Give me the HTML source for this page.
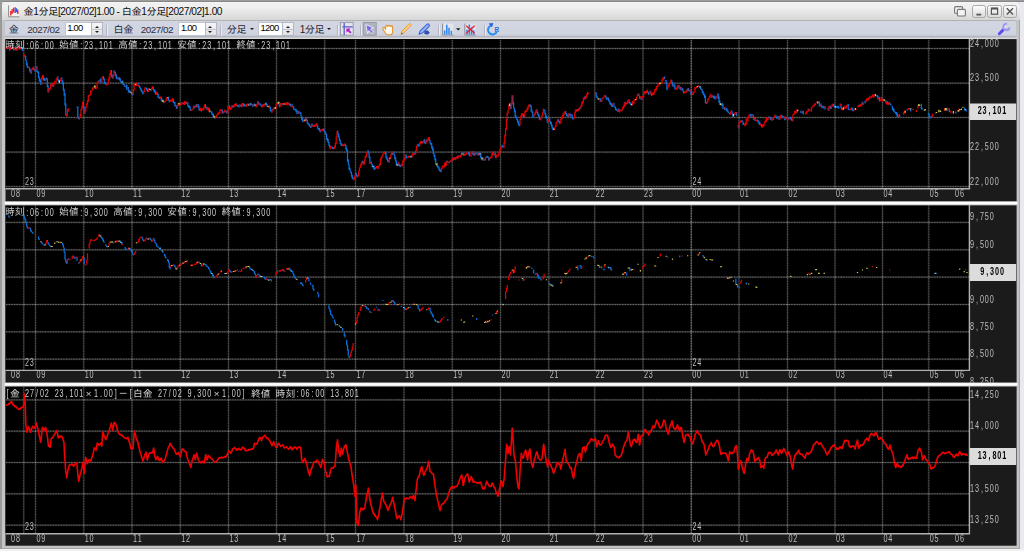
<!DOCTYPE html>
<html lang="ja"><head><meta charset="utf-8"><title>金1分足</title>
<style>
html,body{margin:0;padding:0}
body{width:1024px;height:551px;overflow:hidden;position:relative;background:#e9e9f0;font-family:"Liberation Sans","IPAGothic",sans-serif;font-size:10px;color:#1a1a1a}
body *{position:absolute;box-sizing:border-box}
#o1{left:0;top:0;width:1024px;height:2.4px;background:linear-gradient(#9c9c9c 0,#9c9c9c 1.3px,#878787 1.5px,#878787)}
#o2{left:0;top:0;width:1.8px;height:551px;background:#9a9a9a}
#o3{left:0;top:548.6px;width:1024px;height:3px;background:#f2f2f2}
#win{left:1.8px;top:2.4px;width:1017.8px;height:546.2px;background:#c4c4c4;border-radius:3.5px 3.5px 0 0;border-right:1px solid #a6a6a6;border-bottom:1px solid #a6a6a6}
#title{left:1.8px;top:2.4px;width:1017.8px;height:17.8px;border-radius:3.5px 3.5px 0 0;background:linear-gradient(#fafafa 0,#f0f0f0 1.2px,#f0f0f0 30%,#e6e6e6 55%,#d7d7d7 100%)}
#tt{left:23.6px;top:5.6px;font-size:10.2px;line-height:12px;white-space:nowrap;letter-spacing:-0.47px;color:#0c0c0c}
#tool{left:4.8px;top:20px;width:1011.6px;height:18px;background:linear-gradient(#b2b2b4 0,#b2b2b4 0.8px,#d2d6e2 1.2px,#d0d4e0 14px,#c6cad6 15.6px,#a9adba 16.8px,#a9adba 17.4px,#dcdcdc 17.8px,#dcdcdc)}
.tx{top:24.6px;font-size:10.2px;line-height:10px;white-space:nowrap;color:#23232e}
.nm{letter-spacing:-0.5px;top:25.3px;font-size:9.9px;color:#2a2f42}
.inp{top:22.2px;height:13.6px;background:#fff;border:1px solid #c2c5cf;border-right:0;font-size:9.4px;line-height:10px;padding:0 0 0 1.6px;letter-spacing:-0.75px;color:#000}
.spin{top:22.2px;width:11.6px;height:13.6px;border:1px solid #b4b7c1;background:linear-gradient(#f6f6f8,#e0e0e6)}
.spin:before{position:absolute;content:"";left:2.4px;top:2.8px;border:2.3px solid transparent;border-top:0;border-bottom:2.6px solid #222}
.spin:after{position:absolute;content:"";left:2.400px;top:7.800px;border:2.3px solid transparent;border-bottom:0;border-top:2.6px solid #222}
.spin i{left:0;right:0;top:5.800px;height:1px;background:#c4c6ce}
.sep{top:25px;width:2px;height:10.5px;border-left:1px solid #b3b6c2;background:#ececf4}
.dd{top:28.2px;border:2px solid transparent;border-bottom:0;border-top:2.3px solid #1a1a1a}
.ic{top:22.2px;width:13.4px;height:13.2px}
.wb{top:4.6px;width:14.2px;height:13.6px;border:1px solid #a9a9a9;border-radius:2.6px;background:linear-gradient(#fcfcfc,#ececec 50%,#dadada)}
svg{overflow:visible}
</style></head>
<body>
<div id="o1"></div><div id="o2"></div><div id="o3"></div>
<div id="win"></div>
<div id="title"></div>
<svg style="left:6px;top:3px" width="18" height="17" viewBox="6 3 18 17">
<rect x="8.6" y="5.6" width="10.6" height="11" fill="#f3f3f3"/>
<path d="M8.600 5.400v11.400h10.800" stroke="#8c8c8c" stroke-width="1" fill="none"/>
<path d="M10.800 15.600v-4.600M12.200 13.800v-4.800M15.200 13v-5.800M17.800 14v-4.400" stroke="#f01820" stroke-width="1.300" fill="none"/>
<path d="M13.700 12.600v-4.800M16.500 12.200v-4" stroke="#2060e8" stroke-width="1.300" fill="none"/>
</svg>
<span id="tt">金1分足[2027/02]1.00 - 白金1分足[2027/02]1.00</span>
<svg style="left:950px;top:3px" width="70" height="17" viewBox="950 3 70 17">
<rect x="954.6" y="6.6" width="8" height="6.6" rx="1" fill="#f2f2f2" stroke="#777" stroke-width="1.1"/>
<rect x="957.4" y="9.4" width="8" height="6.6" rx="1" fill="#f2f2f2" stroke="#777" stroke-width="1.1"/>
</svg>
<div class="wb" style="left:971.8px"></div><div class="wb" style="left:987.4px"></div><div class="wb" style="left:1002.8px"></div>
<svg style="left:958px;top:3px" width="62" height="17" viewBox="958 3 62 17" fill="none" stroke="#555" stroke-width="1.5">
<path d="M976.400 14.600h4.800" stroke-width="1.800"/>
<rect x="991.400" y="8.200" width="6.200" height="6" stroke-width="1.200"/><path d="M991.400 8.600h6.200" stroke-width="1.900"/>
<path d="M1006.800 8.200l6.200 6.400M1013 8.200l-6.200 6.400" stroke-width="1.400"/>
</svg>
<div id="tool"></div>
<span class="tx" style="left:8.8px">金</span>
<span class="tx nm" style="left:27.2px">2027/02</span>
<div class="inp" style="left:64.6px;width:26.6px">1.00</div><div class="spin" style="left:91.2px"><i></i></div>
<div class="sep" style="left:106.4px"></div>
<span class="tx" style="left:113.6px;letter-spacing:-0.6px">白金</span>
<span class="tx nm" style="left:140.8px">2027/02</span>
<div class="inp" style="left:178.4px;width:26.6px">1.00</div><div class="spin" style="left:205px"><i></i></div>
<div class="sep" style="left:220.4px"></div>
<span class="tx" style="left:226.8px;letter-spacing:-0.6px">分足</span>
<div class="dd" style="left:250.2px"></div>
<div class="inp" style="left:258px;width:24.2px">1200</div><div class="spin" style="left:282.2px"><i></i></div>
<span class="tx" style="left:299.8px;letter-spacing:-0.6px">1分足</span>
<div class="dd" style="left:327px"></div>
<div class="sep" style="left:336.8px"></div>
<svg style="left:336px;top:21px" width="690" height="17" viewBox="336 21 690 17">
<!-- crosshair tool (pressed) -->
<rect x="340.4" y="22.4" width="12.8" height="12.8" fill="#e4e4e8" stroke="#9a9ca6" stroke-width="1"/>
<path d="M344.2 23v12M342.4 26.8h10.4" stroke="#5a5ad0" stroke-width="1.3" fill="none"/>
<path d="M346.4 28.6h4.2l-1.3 1.3 2.3 2.3-1.4 1.4-2.3-2.3-1.5 1.5z" fill="#b020c0"/>
<rect x="360" y="25" width="1" height="10.5" fill="#b3b6c2"/><rect x="361" y="25" width="1" height="10.5" fill="#ececf4"/>
<!-- pointer (pressed) -->
<rect x="363.2" y="22.4" width="13" height="12.8" fill="#b1b4bd" stroke="#9699a4" stroke-width="1"/>
<path d="M365.8 24.6l7.8 3.2-3 1.2 3 3-1.6 1.6-3-3-1.3 3z" fill="#7a66dc" stroke="#f4f2ff" stroke-width="0.9" stroke-linejoin="round"/>
<!-- hand -->
<path d="M384.6 27.6c-1.2-.6-2.4.6-1.6 1.8l2.4 3.8c.6 1 1.6 1.6 2.8 1.6h1.8c1.6 0 2.6-1.2 2.6-2.8v-5.200c0-1.200-1.600-1.200-1.600 0c0-1.800-1.800-1.800-1.800-.4c0-1.600-1.800-1.600-1.800 0c0-1.400-1.800-1.400-1.800 0v3z" fill="#fff8ec" stroke="#e09838" stroke-width="1.1" stroke-linejoin="round"/>
<!-- pencil -->
<path d="M401 34.400l1-3.200 7.200-7.400c.8-.8 2.600.8 1.800 1.800l-7.200 7.400z" fill="#f6cf8a" stroke="#e8a030" stroke-width="1" stroke-linejoin="round"/>
<path d="M401 34.400l.6-2 1.400 1.400z" fill="#7a5520"/>
<!-- highlighter -->
<path d="M419 34.200l1.200-3.400 7-6.600c1-.9 3 1.100 2 2.100l-6.800 6.800z" fill="#9ab6f4" stroke="#3c64d8" stroke-width="1.1" stroke-linejoin="round"/>
<path d="M424.600 30.800l3.400-.2 1.800 2.400-2.600 1.800-3-1z" fill="#2c4fb0"/>
<rect x="438" y="25" width="1" height="10.500" fill="#b3b6c2"/><rect x="439" y="25" width="1" height="10.500" fill="#ececf4"/>
<!-- bar chart -->
<rect x="442.400" y="23.600" width="11" height="11.400" fill="#e4e4ea"/>
<path d="M442.600 23.600v11.400h11" stroke="#8a8c96" stroke-width="1" fill="none"/>
<path d="M444.600 34.400v-4M446.800 34.400v-9.600M449 34.400v-6.600M451.400 34.400v-3.600" stroke="#2a84f4" stroke-width="1.500" fill="none"/>
<path d="M456 28.200h4.400l-2.200 2.400z" fill="#1a1a1a"/>
<!-- chart with X -->
<rect x="464.600" y="23.600" width="11" height="11.400" fill="#dedee6"/>
<path d="M464.800 23.600v11.400h11" stroke="#8a8c96" stroke-width="1" fill="none"/>
<path d="M467 34.400v-4.600M469.400 34.400v-9.800M471.600 34.400v-6.800M473.800 34.400v-3.800" stroke="#2a84f4" stroke-width="1.500" fill="none"/>
<path d="M466.200 25.800l8.400 7.400M474.600 25.800l-8.400 7.400" stroke="#e82030" stroke-width="1.300" fill="none"/>
<rect x="484" y="25" width="1" height="10.500" fill="#b3b6c2"/><rect x="485" y="25" width="1" height="10.500" fill="#ececf4"/>
<!-- refresh R -->
<path d="M491.400 25.400a4.600 4.600 0 1 0 5.600 5.800" stroke="#2a8cf0" stroke-width="2" fill="none"/>
<path d="M488.600 23.400l4.600-.4-1.200 4.200z" fill="#2060e0"/>
<text x="494.400" y="31.800" font-family="'Liberation Sans',sans-serif" font-size="6.400" font-weight="bold" fill="#2a6ce0">R</text>
<!-- wrench -->
<path d="M999.3 33.7l4.4-4.3" stroke="#5a4af0" stroke-width="2.9" stroke-linecap="round" fill="none"/>
<path d="M1009.5 27.6a3 3 0 1 1-2.600-3.600" stroke="#a29ae8" stroke-width="2.3" fill="none"/>
<path d="M1004.6 27.8l1.400-2.600" stroke="#f0eeff" stroke-width="1.2" fill="none"/>
</svg>
<svg width="1024" height="551" viewBox="0 0 1024 551" style="position:absolute;left:0;top:0;will-change:transform" font-family="'Liberation Sans','IPAGothic',sans-serif" font-size="10">
<defs><filter id="bl" x="0" y="0" width="1024" height="551" filterUnits="userSpaceOnUse"><feGaussianBlur stdDeviation="0.5"/></filter><filter id="bl2" x="0" y="0" width="1024" height="551" filterUnits="userSpaceOnUse"><feGaussianBlur stdDeviation="0.35"/></filter></defs>
<rect x="4.8" y="37.6" width="1012.2" height="1.6" fill="#dadada"/>
<rect x="5.5" y="39.1" width="1011.1" height="162.4" fill="#1b1b1b"/>
<rect x="5.5" y="39.1" width="963.5" height="149.3" fill="#000"/>
<clipPath id="c0"><rect x="6" y="39.6" width="963" height="148.8"/></clipPath>
<g clip-path="url(#c0)" fill="none" stroke="#fff"><path d="M6 48.5H969M6 83.2H969M6 117.5H969M6 152.1H969M6 186.6H969" stroke-width="2.2" stroke-opacity="0.09"/><path d="M6 48.5H969M6 83.2H969M6 117.5H969M6 152.1H969M6 186.6H969" stroke-width="1" stroke-opacity="0.12"/><path d="M6 48.5H969M6 83.2H969M6 117.5H969M6 152.1H969M6 186.6H969" stroke-width="1" stroke-opacity="0.26" stroke-dasharray="1.3 1.3"/><path d="M35.5 39.6V188.4M83.75 39.6V188.4M132 39.6V188.4M180.25 39.6V188.4M228.5 39.6V188.4M276.5 39.6V188.4M324.75 39.6V188.4M355.5 39.6V188.4M404 39.6V188.4M452.25 39.6V188.4M500.5 39.6V188.4M548.75 39.6V188.4M594.75 39.6V188.4M643 39.6V188.4M691.25 39.6V188.4M739 39.6V188.4M787.5 39.6V188.4M835 39.6V188.4M882.5 39.6V188.4M928.75 39.6V188.4M23.75 39.6V188.4M691.25 39.6V188.4" stroke-width="2.2" stroke-opacity="0.08"/><path d="M35.5 39.6V188.4M83.75 39.6V188.4M132 39.6V188.4M180.25 39.6V188.4M228.5 39.6V188.4M276.5 39.6V188.4M324.75 39.6V188.4M355.5 39.6V188.4M404 39.6V188.4M452.25 39.6V188.4M500.5 39.6V188.4M548.75 39.6V188.4M594.75 39.6V188.4M643 39.6V188.4M691.25 39.6V188.4M739 39.6V188.4M787.5 39.6V188.4M835 39.6V188.4M882.5 39.6V188.4M928.75 39.6V188.4M23.75 39.6V188.4M691.25 39.6V188.4" stroke-width="1" stroke-opacity="0.09"/><path d="M35.5 39.6V188.4M83.75 39.6V188.4M132 39.6V188.4M180.25 39.6V188.4M228.5 39.6V188.4M276.5 39.6V188.4M324.75 39.6V188.4M355.5 39.6V188.4M404 39.6V188.4M452.25 39.6V188.4M500.5 39.6V188.4M548.75 39.6V188.4M594.75 39.6V188.4M643 39.6V188.4M691.25 39.6V188.4M739 39.6V188.4M787.5 39.6V188.4M835 39.6V188.4M882.5 39.6V188.4M928.75 39.6V188.4M23.75 39.6V188.4M691.25 39.6V188.4" stroke-width="1" stroke-opacity="0.22" stroke-dasharray="1.3 1.3"/></g>
<g clip-path="url(#c0)"><path d="M7.2 47.6V48.9M8.0 48.1V49.1M9.6 46.5V50.7M12.0 46.5V48.6M13.6 46.6V50.4M15.2 46.7V50.0M16.0 49.4V50.5M20.0 46.2V49.6M22.5 47.0V51.1M24.9 54.8V56.8M25.7 56.0V60.8M26.5 60.4V65.4M27.3 63.2V68.0M28.9 66.3V68.3M29.7 67.8V71.4M30.5 69.5V73.1M33.7 66.8V69.9M34.5 69.5V71.2M36.9 66.2V71.9M37.7 71.1V72.9M38.5 71.6V77.7M39.3 76.4V81.2M40.1 78.8V82.5M40.9 80.2V84.9M43.3 75.3V80.0M44.1 77.7V80.8M44.9 78.5V80.9M46.5 77.6V79.5M47.3 78.4V87.1M48.1 85.3V92.5M52.9 83.6V86.6M57.8 76.2V80.5M58.6 79.3V82.1M61.8 77.5V81.6M62.6 80.3V84.6M63.4 82.1V90.8M64.2 88.9V95.7M65.0 93.2V105.4M65.8 103.3V115.6M77.0 106.7V107.7M77.8 106.5V117.8M78.6 117.3V119.0M83.4 101.6V107.9M84.2 106.4V113.7M95.5 85.5V89.1M98.7 80.4V82.0M100.3 78.6V82.1M101.1 81.2V83.0M103.5 75.9V79.8M104.3 78.3V84.1M105.1 82.3V83.8M105.9 82.3V84.9M111.5 70.0V76.8M112.3 74.5V78.6M114.7 70.4V73.5M115.5 72.3V76.0M116.3 74.5V78.7M117.1 76.8V79.6M118.8 77.3V79.8M119.6 77.2V80.5M120.4 78.5V81.7M121.2 81.6V83.1M122.8 80.5V84.7M123.6 83.6V85.0M124.4 84.2V86.8M126.0 85.1V87.4M126.8 84.8V90.0M128.4 87.1V92.5M129.2 89.8V92.8M130.0 90.8V93.2M131.6 92.0V94.5M132.4 93.0V95.5M138.0 82.7V86.1M139.6 85.3V87.9M140.4 87.3V89.7M141.2 88.4V91.5M142.0 90.0V92.3M142.8 91.3V94.2M146.0 87.6V89.6M146.8 87.7V90.6M147.6 89.1V92.2M149.2 88.1V90.2M150.9 89.2V90.8M153.3 86.9V90.1M154.1 89.0V91.9M154.9 89.8V92.9M155.7 91.2V94.7M157.3 92.4V95.0M158.1 93.6V98.1M158.9 96.5V97.8M159.7 96.7V98.9M161.3 96.7V100.9M162.1 98.4V102.1M163.7 100.2V103.3M168.5 96.8V100.4M169.3 99.9V102.2M171.7 99.9V101.2M173.3 98.8V102.9M174.1 101.5V103.5M174.9 101.9V106.3M175.7 105.0V106.6M176.5 105.4V109.0M179.7 102.8V105.6M183.0 102.4V103.5M183.8 102.6V104.6M185.4 101.8V103.4M186.2 102.1V104.0M187.8 102.1V106.6M188.6 105.3V107.4M189.4 105.5V108.0M190.2 106.6V111.1M194.2 105.7V108.4M196.6 104.2V107.2M198.2 104.1V107.3M199.0 106.0V110.3M199.8 108.7V110.8M201.4 108.5V111.5M205.4 104.1V107.9M206.2 106.4V109.4M207.8 107.0V110.3M209.4 108.0V112.6M211.0 111.4V112.4M211.8 111.2V114.4M212.6 113.2V115.5M213.4 114.1V117.4M215.1 115.9V118.7M221.5 109.4V110.7M222.3 109.6V113.7M223.9 111.3V113.1M225.5 110.4V111.4M226.3 110.6V113.1M229.5 105.4V109.1M232.7 104.9V107.8M235.9 103.3V106.1M237.5 105.0V106.8M238.3 104.7V106.2M239.1 105.7V107.6M240.7 104.7V106.5M241.5 104.6V107.3M243.1 103.1V105.2M243.9 103.6V106.7M244.7 104.2V106.1M245.5 105.0V106.3M248.0 103.4V105.8M250.4 103.3V105.5M251.2 103.1V105.5M252.8 103.9V106.7M254.4 103.6V106.3M256.0 104.4V107.2M258.4 101.6V104.5M260.0 102.9V104.7M260.8 103.9V105.7M261.6 105.2V107.0M263.2 104.0V106.3M266.4 102.5V105.7M267.2 104.2V106.8M269.6 105.5V108.3M270.4 107.0V111.2M271.2 109.7V112.3M272.8 108.9V110.6M279.3 101.7V107.2M280.9 103.1V105.4M283.3 103.2V104.9M285.7 102.9V105.0M287.3 102.1V104.7M288.9 103.0V104.5M289.7 103.4V105.4M290.5 103.8V106.4M292.1 103.8V107.3M293.7 105.9V109.7M294.5 109.3V110.3M295.3 108.8V110.5M296.1 108.8V112.0M296.9 110.4V113.9M298.5 111.0V114.1M300.1 111.8V113.5M300.9 112.4V116.1M301.7 115.8V119.9M302.5 117.9V121.8M303.3 119.9V121.8M306.5 118.0V120.8M307.3 119.8V123.6M308.1 122.8V124.8M308.9 123.4V125.4M309.7 124.3V126.7M310.5 126.1V127.8M312.2 123.8V126.4M313.8 125.1V127.0M317.0 123.7V126.6M317.8 125.7V129.2M318.6 128.3V129.8M319.4 128.1V130.7M320.2 129.6V132.4M321.8 129.7V130.7M323.4 128.5V130.7M324.2 129.4V131.8M325.0 131.0V133.3M325.8 132.3V135.1M326.6 134.1V139.7M327.4 138.0V141.6M328.2 139.1V143.1M329.0 142.0V146.1M329.8 144.9V148.4M332.2 146.4V148.4M333.0 146.9V148.9M333.8 147.9V148.9M337.8 130.5V135.3M338.6 133.4V137.6M339.4 136.5V141.1M340.2 139.6V143.8M341.0 142.7V145.5M341.8 143.4V146.0M343.5 144.4V146.0M345.1 143.8V145.7M345.9 144.7V149.6M346.7 147.7V151.5M347.5 149.9V161.7M348.3 159.2V164.7M349.1 164.3V170.0M349.9 167.6V170.6M350.7 170.2V173.0M351.5 171.9V176.8M352.3 174.9V179.2M353.1 177.4V179.3M356.3 172.8V176.1M357.1 174.5V177.3M362.7 160.8V163.0M363.5 161.8V164.2M368.3 150.2V153.3M369.1 152.5V158.1M369.9 156.8V163.7M371.5 161.4V164.6M372.3 164.1V167.5M373.9 165.3V169.8M374.7 167.3V169.7M377.2 166.1V167.6M378.0 166.8V168.7M385.2 151.3V154.3M386.0 152.8V158.1M386.8 156.2V159.7M387.6 158.2V161.6M388.4 160.2V162.2M392.4 152.3V154.9M394.0 151.4V155.3M394.8 154.8V159.2M395.6 157.3V161.6M396.4 160.5V165.5M398.8 162.6V166.0M399.6 164.3V166.6M400.4 165.0V167.0M402.0 163.6V165.7M406.0 154.2V158.5M406.8 156.4V158.2M410.1 155.6V157.8M414.1 152.3V155.0M418.1 143.7V146.3M418.9 144.7V146.4M421.3 140.9V143.3M422.1 141.3V143.0M424.5 139.1V143.3M425.3 141.2V144.0M426.9 139.4V142.2M429.3 137.2V140.5M430.1 139.9V143.7M430.9 142.6V145.0M431.7 143.1V148.4M432.5 146.2V150.4M433.3 148.5V154.1M434.1 153.2V156.8M434.9 155.1V160.4M435.7 158.6V164.4M437.3 162.7V166.9M438.1 165.4V168.2M438.9 166.8V170.3M439.8 168.8V171.4M440.6 169.7V171.9M443.8 165.6V166.6M445.4 162.7V166.2M447.0 160.5V162.9M448.6 161.7V162.7M453.4 158.3V160.5M455.0 157.1V159.9M457.4 155.9V158.8M459.0 155.4V156.6M459.8 155.5V156.8M463.0 152.3V154.7M463.8 153.2V156.1M465.4 153.7V155.3M468.6 151.9V154.5M469.4 152.7V156.3M470.2 155.2V156.2M472.7 151.0V154.5M473.5 153.4V155.5M474.3 153.1V155.4M475.9 152.4V154.5M476.7 152.7V154.6M478.3 152.6V155.8M480.7 152.7V158.2M481.5 156.3V160.3M483.1 157.5V160.6M484.7 158.8V160.3M486.3 156.8V157.8M487.1 155.7V157.6M487.9 156.1V158.1M488.7 157.5V160.4M493.5 151.4V154.5M495.1 152.9V156.2M495.9 154.9V158.2M502.3 144.9V147.6M503.1 146.0V147.4M510.4 104.7V108.8M512.8 95.5V104.6M513.6 102.2V108.4M514.4 107.9V112.3M515.2 110.2V116.7M516.0 115.2V118.3M516.8 116.9V120.3M517.6 119.2V122.5M518.4 121.1V125.1M519.2 123.1V126.6M523.2 113.4V116.9M524.0 115.1V118.2M530.4 104.6V107.0M531.2 105.5V111.7M532.0 109.7V112.7M532.8 111.8V118.1M536.9 109.3V112.7M537.7 111.8V114.7M538.5 113.7V116.6M539.3 115.3V119.8M540.1 117.9V119.8M544.1 108.9V111.0M544.9 110.2V114.5M545.7 113.1V117.8M546.5 115.8V119.0M547.3 118.7V122.7M549.7 118.3V121.6M550.5 121.1V124.1M551.3 122.1V126.2M552.1 124.8V128.7M552.9 126.9V130.2M558.5 119.5V121.9M559.3 120.8V123.7M565.7 110.9V114.2M566.5 113.0V116.3M567.3 114.8V116.3M568.2 114.3V117.6M569.8 113.2V116.1M570.6 114.0V116.4M572.2 114.3V118.5M573.0 117.2V119.5M577.0 108.9V110.8M577.8 109.4V111.1M580.2 107.0V108.6M585.0 96.1V99.6M596.2 92.5V96.9M597.0 95.8V98.6M597.8 97.5V99.6M600.3 98.3V102.1M605.1 95.3V96.3M605.9 95.6V98.6M606.7 97.3V100.0M608.3 97.4V100.4M609.1 99.0V102.1M609.9 101.3V104.5M610.7 102.6V104.9M611.5 103.3V106.4M612.3 104.2V106.9M613.9 102.8V107.1M614.7 106.5V107.5M615.5 106.5V110.1M616.3 108.4V110.6M617.1 110.0V111.0M618.7 108.5V111.8M621.1 109.4V110.9M625.1 101.8V106.1M629.1 99.4V103.5M629.9 101.9V103.5M630.7 102.4V105.1M633.2 101.3V103.0M638.8 93.6V96.0M639.6 95.7V98.8M641.2 96.9V100.1M645.2 90.9V93.5M647.6 90.6V92.7M648.4 92.0V94.7M650.8 91.2V93.8M651.6 93.4V95.8M653.2 93.0V94.7M657.2 85.7V87.2M664.5 76.6V79.1M665.3 80.2V81.2M666.1 79.9V84.2M666.9 82.7V90.2M671.7 80.0V83.5M672.5 81.9V86.4M674.1 83.5V87.2M674.9 85.6V89.5M678.9 85.1V88.4M680.5 86.7V90.1M682.1 87.7V90.1M682.9 88.5V91.7M683.7 91.1V93.5M685.3 91.4V92.6M686.9 89.6V91.0M688.5 88.0V91.0M689.3 90.2V91.6M690.9 89.6V94.2M691.7 91.5V94.7M699.0 85.8V87.3M700.6 85.9V89.2M701.4 88.7V90.1M702.2 89.3V92.7M703.0 91.1V94.5M703.8 92.4V95.6M704.6 94.2V98.0M705.4 95.8V103.0M706.2 102.1V104.1M711.0 94.8V97.4M712.6 95.6V97.3M713.4 95.8V97.4M714.2 95.5V99.0M715.0 97.3V99.3M716.6 96.8V97.8M718.2 93.5V99.1M719.0 96.5V102.9M719.8 100.5V105.0M721.4 103.8V105.5M722.2 102.8V106.2M723.0 103.7V108.9M724.6 107.5V110.0M726.2 107.7V110.4M727.0 108.6V111.4M727.8 110.1V112.5M728.7 111.7V113.0M729.5 112.7V114.1M731.9 110.6V113.5M732.7 112.4V116.4M736.7 111.9V116.1M738.3 124.9V127.5M742.3 120.2V121.9M743.1 121.5V124.7M743.9 123.3V125.1M747.1 119.1V120.9M750.3 114.2V115.9M751.1 113.8V117.9M752.7 114.2V115.8M753.5 115.6V119.8M755.1 117.6V121.0M757.5 119.6V121.2M758.3 120.3V122.7M759.1 121.6V124.4M759.9 122.2V125.1M761.6 124.0V127.2M763.2 124.5V126.5M767.2 117.9V120.0M768.8 116.6V117.9M769.6 116.7V118.1M770.4 117.4V120.0M772.0 118.0V120.7M776.0 115.5V117.7M776.8 116.7V118.8M778.4 116.4V117.4M779.2 116.0V119.9M781.6 114.8V117.4M782.4 115.7V117.4M783.2 115.9V117.9M784.8 116.8V120.2M786.4 118.0V119.0M788.0 117.2V119.7M790.4 116.7V118.9M791.2 117.8V120.2M792.0 119.0V121.1M796.1 110.8V112.9M800.9 110.7V113.0M802.5 111.5V113.2M803.3 110.8V114.4M808.9 108.7V110.8M809.7 109.8V110.8M819.3 101.3V106.5M820.9 103.6V106.9M821.7 105.4V107.6M822.5 106.8V108.1M823.3 105.8V108.5M825.0 105.9V109.6M828.2 107.6V110.5M830.6 105.8V109.0M833.0 103.8V105.2M833.8 103.7V106.3M834.6 105.3V107.8M836.2 106.0V107.9M837.8 105.8V108.2M838.6 106.1V108.7M841.0 103.8V108.3M841.8 107.1V109.7M845.0 106.2V108.8M848.2 104.1V109.6M849.0 108.9V110.3M849.8 109.2V110.3M852.2 107.7V110.8M853.0 108.5V111.0M859.5 104.6V106.5M862.7 101.8V104.8M865.1 100.8V103.5M867.5 98.4V100.5M873.1 94.6V97.1M877.1 95.0V96.9M877.9 95.7V99.6M879.5 97.1V101.4M881.9 97.8V101.3M883.5 98.9V100.5M885.9 100.3V103.3M887.5 101.2V104.6M889.2 102.1V104.5M890.0 103.6V104.6M890.8 103.4V105.5M892.4 106.0V109.9M893.2 108.3V110.9M894.0 108.5V112.0M894.8 111.3V112.7M895.6 112.0V113.8M896.4 112.0V115.3M897.2 112.7V117.3M898.0 115.2V116.7M899.6 114.6V117.0M906.8 109.5V110.6M910.8 108.1V111.4M921.3 103.8V109.0M922.1 107.7V109.8M928.5 112.9V114.8M929.3 114.0V117.9M930.1 115.9V118.6M946.9 108.3V110.4M949.3 108.6V112.2M955.8 111.6V113.5M964.6 107.4V110.4M966.2 109.2V111.5" stroke="#0a72e0" stroke-width="1.25" fill="none"/><path d="M6.4 46.6V48.7M8.8 46.5V48.8M10.4 46.7V50.0M11.2 47.1V48.1M14.4 47.5V49.5M16.8 48.5V50.8M17.6 46.3V50.2M18.4 45.8V48.4M19.2 46.5V47.5M20.8 47.3V49.8M24.1 53.9V56.7M28.1 66.4V67.6M31.3 69.6V73.9M32.1 68.1V70.4M32.9 67.6V69.2M35.3 67.7V71.3M36.1 66.7V69.2M41.7 77.3V84.8M42.5 74.9V79.3M45.7 78.2V81.1M48.9 88.1V92.4M49.7 87.5V90.3M50.5 84.2V89.3M51.3 84.4V85.8M52.1 82.8V86.4M53.7 83.2V86.9M54.6 81.1V84.6M55.4 80.8V81.8M56.2 78.6V81.9M57.0 77.3V79.7M60.2 79.8V81.8M61.0 77.5V80.7M66.6 114.2V116.3M67.4 109.3V116.4M68.2 108.2V112.0M69.0 108.3V109.3M79.4 116.7V119.7M80.2 113.7V118.0M81.0 108.7V116.1M81.8 105.8V109.9M82.6 101.8V108.3M85.0 109.4V113.7M85.8 106.2V111.5M86.7 103.2V107.6M87.5 100.3V104.6M88.3 95.0V101.9M89.1 95.2V97.0M89.9 94.0V95.5M90.7 90.6V95.5M91.5 90.2V92.5M92.3 87.8V90.6M93.1 87.3V88.7M93.9 86.3V88.7M96.3 87.3V89.2M97.1 82.2V87.9M97.9 81.1V83.6M99.5 79.9V82.1M101.9 77.0V82.1M102.7 76.2V77.4M106.7 84.2V85.5M107.5 83.1V84.7M108.3 78.7V84.5M109.1 76.4V80.5M109.9 72.9V78.4M110.7 70.2V75.3M113.1 75.2V78.7M113.9 70.5V76.6M117.9 77.5V78.8M125.2 85.1V86.1M127.6 87.2V89.4M133.2 89.2V95.1M134.0 83.9V91.1M134.8 83.8V85.8M136.4 82.3V86.0M137.2 83.0V84.2M138.8 84.9V86.9M143.6 91.5V93.9M144.4 88.6V92.2M145.2 87.0V89.1M148.4 88.4V91.9M151.7 87.7V90.8M152.5 86.0V89.0M156.5 91.6V94.9M160.5 96.6V98.7M164.5 101.5V102.5M165.3 100.8V102.2M166.1 98.5V101.1M166.9 96.9V100.9M170.1 100.0V102.3M170.9 99.3V101.6M172.5 98.0V101.4M177.3 105.1V108.7M178.1 103.1V106.5M180.5 103.4V105.4M181.3 102.2V104.8M182.1 102.3V104.5M184.6 101.1V105.0M187.0 101.5V103.7M191.0 109.9V110.9M191.8 109.0V110.7M192.6 108.8V109.8M193.4 105.8V109.3M195.0 105.9V108.0M195.8 104.6V107.4M197.4 104.3V107.2M200.6 107.4V110.9M202.2 109.2V110.5M203.0 108.1V110.6M203.8 106.8V109.9M204.6 104.6V107.7M207.0 107.5V109.0M208.6 107.6V111.5M215.9 116.2V117.9M216.7 114.5V117.5M217.5 113.4V115.3M218.3 112.6V114.7M219.1 112.0V113.7M219.9 109.9V113.4M220.7 109.0V110.9M223.1 111.2V113.5M224.7 109.6V112.0M227.1 111.2V113.9M227.9 106.2V112.6M228.7 106.2V108.8M230.3 107.0V110.0M231.1 106.7V109.5M231.9 104.9V107.4M233.5 106.0V107.7M234.3 103.8V106.9M235.1 103.7V105.9M236.7 103.8V106.2M239.9 103.9V106.8M242.3 102.9V106.5M246.3 103.8V107.0M247.2 103.9V105.7M249.6 102.8V105.5M252.0 104.2V105.6M253.6 104.5V106.3M256.8 103.7V107.2M257.6 101.0V104.5M259.2 102.6V105.4M262.4 104.8V107.4M264.0 103.8V106.7M264.8 103.6V105.1M268.8 105.4V108.0M272.0 109.0V112.8M273.6 107.6V110.3M274.4 107.4V108.6M276.0 104.7V109.2M276.8 102.9V105.4M277.6 102.3V104.2M280.1 103.1V107.2M281.7 103.6V105.9M282.5 103.0V104.0M284.9 102.4V104.7M286.5 102.5V105.2M288.1 102.0V105.2M291.3 104.6V106.7M292.9 105.7V107.7M297.7 110.2V113.6M299.3 111.7V113.6M304.1 119.3V122.3M305.7 117.8V121.6M311.4 123.8V127.8M313.0 125.0V126.8M314.6 124.6V127.0M315.4 124.8V126.2M316.2 122.9V126.2M321.0 129.1V131.6M322.6 128.7V131.3M330.6 146.0V149.2M331.4 146.0V147.3M334.6 147.9V149.3M334.6 145.7V148.0M335.4 142.4V147.5M336.2 136.3V144.2M337.0 130.9V137.2M342.6 144.4V146.3M344.3 143.5V145.6M353.9 177.1V180.3M354.7 175.5V179.5M355.5 174.0V177.4M357.9 175.0V177.6M358.7 170.7V176.1M359.5 167.5V171.1M360.3 165.1V168.0M361.1 163.1V166.1M361.9 161.2V165.0M364.3 159.6V164.4M365.1 156.0V160.7M365.9 155.2V157.8M366.7 152.2V156.6M367.5 150.3V153.8M370.7 162.2V163.4M375.6 166.7V169.4M376.4 166.0V168.2M378.8 165.2V169.0M379.6 163.6V166.2M380.4 158.3V165.0M381.2 156.7V160.4M382.0 155.3V158.2M382.8 153.5V155.8M383.6 152.1V154.1M384.4 152.1V153.8M389.2 157.5V162.8M390.8 154.2V159.2M391.6 152.1V155.6M393.2 151.1V154.0M398.0 161.7V165.1M401.2 164.5V166.3M402.8 160.5V166.5M403.6 159.2V161.7M404.4 158.2V160.7M405.2 154.8V159.6M407.7 156.2V157.8M408.5 156.1V158.0M409.3 155.5V157.6M411.7 154.7V158.0M412.5 153.6V156.6M413.3 152.6V154.4M414.9 153.0V154.8M415.7 150.1V154.3M416.5 146.0V150.9M417.3 144.0V147.0M419.7 142.4V146.4M420.5 141.2V144.2M422.9 141.2V143.8M423.7 139.7V142.4M426.1 139.8V143.8M427.7 138.5V141.9M428.5 136.9V140.2M441.4 167.8V172.3M442.2 165.9V169.1M443.0 165.2V167.7M444.6 162.5V167.6M446.2 161.0V165.9M447.8 161.8V162.9M449.4 161.3V163.2M450.2 161.2V162.2M451.0 159.9V162.0M451.8 159.3V162.1M452.6 157.9V159.8M454.2 157.1V160.0M455.8 157.1V160.2M456.6 156.6V157.9M458.2 155.6V158.4M460.6 155.0V157.7M461.4 152.8V156.5M464.6 153.7V155.8M466.2 152.4V155.0M467.0 152.2V155.0M467.8 151.6V152.7M471.0 151.7V156.8M471.9 150.9V153.4M475.1 152.4V155.9M477.5 153.2V154.7M479.1 152.7V155.7M483.9 159.0V161.0M485.5 156.6V160.6M489.5 157.2V160.4M490.3 157.2V159.1M491.1 156.3V157.9M491.9 153.3V157.8M492.7 151.5V155.8M494.3 153.7V154.8M496.7 154.4V157.7M498.3 153.4V156.7M499.1 151.4V154.6M499.9 148.8V153.7M500.7 146.7V150.6M501.5 145.7V147.8M504.0 142.3V148.3M504.8 134.4V143.7M505.6 128.0V136.8M506.4 119.0V130.0M507.2 112.4V120.4M508.0 110.1V114.0M508.8 104.9V110.4M511.2 102.6V109.1M512.0 95.3V104.5M520.0 119.3V125.8M520.8 115.4V120.1M521.6 113.1V116.6M522.4 113.3V115.9M524.8 111.3V117.6M525.6 110.2V112.7M526.4 110.1V111.9M527.2 107.7V111.2M528.0 105.7V110.0M528.8 104.6V107.5M529.6 104.0V106.5M533.6 114.5V117.6M534.4 113.7V115.4M535.2 111.6V115.1M536.1 109.6V113.4M540.9 117.1V120.5M541.7 115.7V118.3M542.5 112.3V116.3M543.3 108.4V113.5M548.1 119.9V122.0M548.9 119.1V122.3M554.5 127.7V130.1M555.3 125.7V127.8M556.1 122.0V127.1M556.9 120.8V123.8M557.7 119.0V121.8M560.1 121.8V124.1M560.9 118.3V122.9M561.7 116.5V120.5M562.5 115.0V118.4M563.3 113.1V116.7M564.1 112.1V115.1M564.9 110.9V113.2M569.0 113.1V117.2M571.4 114.0V116.6M573.8 116.8V119.5M574.6 112.5V117.9M575.4 109.7V113.6M576.2 109.3V112.0M578.6 108.6V111.3M579.4 107.5V110.1M581.0 105.1V108.4M581.8 101.8V106.8M582.6 101.0V104.4M583.4 97.9V102.6M584.2 97.1V99.6M585.8 96.1V99.3M586.6 94.0V97.9M587.4 92.0V95.1M588.2 92.4V94.6M595.4 92.1V94.7M599.4 98.0V99.0M601.1 100.0V102.1M601.9 98.1V101.4M602.7 97.4V98.6M603.5 97.1V98.4M604.3 95.3V97.3M607.5 97.2V99.1M613.1 102.9V105.8M617.9 109.1V112.1M619.5 109.6V112.8M620.3 109.8V111.2M621.9 109.6V111.5M622.7 106.7V110.1M623.5 105.6V108.6M624.3 102.5V107.2M625.9 103.1V104.9M626.7 102.5V104.1M627.5 100.7V103.9M628.3 99.3V102.6M632.4 100.9V105.4M634.0 99.8V103.7M634.8 99.0V100.9M636.4 96.9V100.3M637.2 94.8V97.6M638.0 93.5V95.4M640.4 96.2V97.9M642.0 95.9V99.7M642.8 96.1V97.1M643.6 92.9V97.8M644.4 91.2V94.6M646.0 91.9V93.2M646.8 89.7V93.2M649.2 93.0V94.3M650.0 90.6V94.4M652.4 92.5V95.6M654.0 91.3V94.7M654.8 88.9V92.9M655.6 88.6V91.0M656.4 86.1V90.2M658.0 82.7V87.1M658.8 83.4V85.1M661.2 82.8V83.9M662.0 79.2V84.1M662.8 77.6V80.8M663.6 77.3V79.8M667.7 86.2V89.9M668.5 84.6V87.5M669.3 82.9V86.1M670.1 83.3V84.3M670.9 79.5V84.1M673.3 84.4V86.5M675.7 88.1V89.4M676.5 87.6V89.9M677.3 85.8V88.9M678.1 85.0V87.2M679.7 86.6V89.3M681.3 87.3V90.6M684.5 91.4V93.6M686.1 89.7V93.0M687.7 88.0V91.8M690.1 89.4V91.4M692.5 93.2V95.1M693.3 92.2V94.9M694.1 91.3V92.9M694.9 86.9V92.2M695.7 87.7V89.2M696.6 86.4V88.1M698.2 85.2V87.0M707.0 101.4V104.2M707.8 98.8V102.6M708.6 97.9V99.8M709.4 96.3V98.3M710.2 93.8V97.5M711.8 94.8V98.0M715.8 96.1V99.4M717.4 93.5V97.6M723.8 106.6V108.9M725.4 107.3V109.6M730.3 112.1V114.8M731.1 110.3V114.4M734.3 113.6V115.1M735.1 112.1V115.1M735.9 111.9V114.2M739.1 122.2V128.3M739.9 121.3V122.8M740.7 120.6V123.1M741.5 120.0V122.1M744.7 123.7V126.1M745.5 122.2V125.9M746.3 118.3V124.6M747.9 117.6V121.4M748.7 114.8V118.3M749.5 114.3V116.5M751.9 115.4V117.5M754.3 117.4V119.4M755.9 119.5V121.1M756.7 119.9V121.5M760.8 123.5V125.9M762.4 124.3V127.4M764.0 123.3V126.2M764.8 121.1V123.7M765.6 119.7V122.4M766.4 117.1V122.0M768.0 117.1V119.9M771.2 118.4V119.4M772.8 118.3V120.2M773.6 116.9V120.0M774.4 115.8V117.4M775.2 114.6V117.6M777.6 115.9V119.3M780.0 117.1V119.4M780.8 115.0V118.4M784.0 115.9V118.6M785.6 116.8V120.1M787.2 116.7V119.3M788.8 118.5V119.8M789.6 117.7V119.2M792.9 114.3V121.4M793.7 113.7V114.9M794.5 111.1V114.4M795.3 110.8V113.5M796.9 109.0V113.2M801.7 110.8V112.9M805.7 112.6V114.5M806.5 111.1V114.3M807.3 111.4V112.5M808.1 108.8V112.1M811.3 107.5V111.7M812.1 106.6V108.6M812.9 105.6V106.8M813.7 104.5V106.7M814.5 103.7V105.8M815.3 102.9V105.6M816.9 101.5V103.2M820.1 104.7V106.4M824.1 106.4V108.0M829.0 106.1V111.0M829.8 105.6V108.1M831.4 105.7V108.9M832.2 103.7V106.9M840.2 103.4V106.0M842.6 107.5V110.5M844.2 105.8V108.9M845.8 106.7V108.2M846.6 105.0V108.5M847.4 104.6V106.8M850.6 108.2V110.1M851.4 107.3V110.2M853.8 109.0V111.6M856.2 108.7V109.7M857.9 105.5V107.6M858.7 105.6V106.9M860.3 104.4V106.8M861.1 104.1V106.0M861.9 102.5V105.6M863.5 103.0V104.8M865.9 99.7V102.6M866.7 98.2V101.1M868.3 97.9V100.5M869.1 97.0V99.0M869.9 95.8V98.7M871.5 96.1V98.2M872.3 94.6V97.4M873.9 94.5V97.7M874.7 94.5V96.1M878.7 98.0V99.5M880.3 99.7V101.3M881.1 96.7V100.7M882.7 98.4V101.7M886.7 101.7V104.4M888.3 101.9V105.1M898.8 114.3V116.6M903.6 112.3V114.7M904.4 110.5V113.7M907.6 109.3V110.5M908.4 107.9V109.9M913.2 108.7V110.3M916.4 109.7V112.1M918.0 105.0V108.6M931.7 115.8V117.8M932.5 113.8V117.2M935.7 112.3V113.8M944.5 108.4V111.0M947.7 107.4V110.4M950.9 110.5V113.2M959.0 108.5V112.1" stroke="#e00000" stroke-width="1.25" fill="none"/><path d="M12.8 47.1V48.1M21.6 47.0V48.0M59.4 80.3V82.9M94.7 85.4V87.5M122.0 81.5V82.5M130.8 91.8V92.8M135.6 83.7V85.0M150.0 89.1V90.1M162.9 100.1V101.9M167.7 97.2V98.2M178.9 103.1V104.4M210.2 110.4V111.6M214.2 115.7V117.6M248.8 104.4V105.4M255.2 104.5V105.5M265.6 103.6V104.6M268.0 106.0V107.0M275.2 107.1V109.1M278.4 101.8V103.7M284.1 103.4V104.6M304.9 119.4V120.9M373.1 165.9V167.1M390.0 157.7V158.7M397.2 164.0V165.7M410.9 156.2V157.2M436.5 163.7V165.3M462.2 153.4V154.4M479.9 153.3V154.4M482.3 157.8V159.2M509.6 103.6V105.9M553.7 128.6V130.0M598.6 98.5V99.7M631.5 103.7V105.2M635.6 98.9V99.9M659.6 83.2V84.2M660.4 82.6V83.7M697.4 85.9V87.3M699.8 86.6V87.6M720.6 103.2V104.9M733.5 114.0V116.4M797.7 109.7V111.3M817.7 101.5V103.5M835.4 106.0V107.4M843.4 107.5V109.8M855.4 108.1V110.1M875.5 94.1V96.3M884.3 99.2V101.1M905.2 110.8V112.7M910.0 108.2V109.5M918.8 104.0V106.1M919.6 104.7V105.7M924.5 109.4V110.8M925.3 108.9V110.2M936.5 112.1V113.1M938.9 109.7V112.2M940.5 110.4V111.9M945.3 107.9V110.3M946.1 107.9V110.5M953.4 111.1V113.4M958.2 110.0V111.7M959.8 109.0V110.4M961.4 108.5V109.9M963.0 106.7V107.7M965.4 109.3V110.3" stroke="#d4ca58" stroke-width="1.25" fill="none"/></g>
<g clip-path="url(#c0)"><text x="5.00" y="48.1" font-size="9.84" fill="#cfcfcf">時刻</text><text transform="translate(24.68 48.5) scale(0.84 1.36)" font-size="8.6" x="1.73 6.39 12.25 19.30 23.97 29.82 36.88" fill="#cfcfcf" xml:space="preserve">:06:00 </text><text x="59.12" y="48.1" font-size="9.84" fill="#cfcfcf">始値</text><text transform="translate(78.80 48.5) scale(0.84 1.36)" font-size="8.6" x="1.73 6.39 12.25 19.30 23.97 29.82 35.68 42.73" fill="#cfcfcf" xml:space="preserve">:23,101 </text><text x="118.16" y="48.1" font-size="9.84" fill="#cfcfcf">高値</text><text transform="translate(137.84 48.5) scale(0.84 1.36)" font-size="8.6" x="1.73 6.39 12.25 19.30 23.97 29.82 35.68 42.73" fill="#cfcfcf" xml:space="preserve">:23,101 </text><text x="177.20" y="48.1" font-size="9.84" fill="#cfcfcf">安値</text><text transform="translate(196.88 48.5) scale(0.84 1.36)" font-size="8.6" x="1.73 6.39 12.25 19.30 23.97 29.82 35.68 42.73" fill="#cfcfcf" xml:space="preserve">:23,101 </text><text x="236.24" y="48.1" font-size="9.84" fill="#cfcfcf">終値</text><text transform="translate(255.92 48.5) scale(0.84 1.36)" font-size="8.6" x="1.73 6.39 12.25 19.30 23.97 29.82 35.68" fill="#cfcfcf" xml:space="preserve">:23,101</text></g>
<path d="M5.5 188.8H969.4V39.1" stroke="#b0b0b0" stroke-width="1.4" fill="none"/>
<g fill="#bdbdbd"><text transform="translate(10.60 196.5) scale(0.84 1.36)" font-size="8.6" x="0.54 6.39" xml:space="preserve">08</text><text transform="translate(36.00 196.5) scale(0.84 1.36)" font-size="8.6" x="0.54 6.39" xml:space="preserve">09</text><text transform="translate(84.25 196.5) scale(0.84 1.36)" font-size="8.6" x="0.54 6.39" xml:space="preserve">10</text><text transform="translate(132.50 196.5) scale(0.84 1.36)" font-size="8.6" x="0.54 6.39" xml:space="preserve">11</text><text transform="translate(180.75 196.5) scale(0.84 1.36)" font-size="8.6" x="0.54 6.39" xml:space="preserve">12</text><text transform="translate(229.00 196.5) scale(0.84 1.36)" font-size="8.6" x="0.54 6.39" xml:space="preserve">13</text><text transform="translate(277.00 196.5) scale(0.84 1.36)" font-size="8.6" x="0.54 6.39" xml:space="preserve">14</text><text transform="translate(325.25 196.5) scale(0.84 1.36)" font-size="8.6" x="0.54 6.39" xml:space="preserve">15</text><text transform="translate(356.00 196.5) scale(0.84 1.36)" font-size="8.6" x="0.54 6.39" xml:space="preserve">17</text><text transform="translate(404.50 196.5) scale(0.84 1.36)" font-size="8.6" x="0.54 6.39" xml:space="preserve">18</text><text transform="translate(452.75 196.5) scale(0.84 1.36)" font-size="8.6" x="0.54 6.39" xml:space="preserve">19</text><text transform="translate(501.00 196.5) scale(0.84 1.36)" font-size="8.6" x="0.54 6.39" xml:space="preserve">20</text><text transform="translate(549.25 196.5) scale(0.84 1.36)" font-size="8.6" x="0.54 6.39" xml:space="preserve">21</text><text transform="translate(595.25 196.5) scale(0.84 1.36)" font-size="8.6" x="0.54 6.39" xml:space="preserve">22</text><text transform="translate(643.50 196.5) scale(0.84 1.36)" font-size="8.6" x="0.54 6.39" xml:space="preserve">23</text><text transform="translate(691.75 196.5) scale(0.84 1.36)" font-size="8.6" x="0.54 6.39" xml:space="preserve">00</text><text transform="translate(739.50 196.5) scale(0.84 1.36)" font-size="8.6" x="0.54 6.39" xml:space="preserve">01</text><text transform="translate(788.00 196.5) scale(0.84 1.36)" font-size="8.6" x="0.54 6.39" xml:space="preserve">02</text><text transform="translate(835.50 196.5) scale(0.84 1.36)" font-size="8.6" x="0.54 6.39" xml:space="preserve">03</text><text transform="translate(883.00 196.5) scale(0.84 1.36)" font-size="8.6" x="0.54 6.39" xml:space="preserve">04</text><text transform="translate(929.25 196.5) scale(0.84 1.36)" font-size="8.6" x="0.54 6.39" xml:space="preserve">05</text><text transform="translate(954.60 196.5) scale(0.84 1.36)" font-size="8.6" x="0.54 6.39" xml:space="preserve">06</text><text transform="translate(24.45 184.70000000000002) scale(0.84 1.36)" font-size="8.6" x="0.54 6.39" xml:space="preserve">23</text><text transform="translate(691.95 184.70000000000002) scale(0.84 1.36)" font-size="8.6" x="0.54 6.39" xml:space="preserve">24</text><text transform="translate(969.60 46.5) scale(0.84 1.36)" font-size="8.6" x="0.54 6.39 13.45 18.11 23.97 29.82" xml:space="preserve">24,000</text><text transform="translate(969.60 81.2) scale(0.84 1.36)" font-size="8.6" x="0.54 6.39 13.45 18.11 23.97 29.82" xml:space="preserve">23,500</text><text transform="translate(969.60 150.1) scale(0.84 1.36)" font-size="8.6" x="0.54 6.39 13.45 18.11 23.97 29.82" xml:space="preserve">22,500</text><text transform="translate(969.60 184.6) scale(0.84 1.36)" font-size="8.6" x="0.54 6.39 13.45 18.11 23.97 29.82" xml:space="preserve">22,000</text></g>
<rect x="969.7" y="103.5" width="46.39999999999998" height="16.5" fill="#dcdcdc"/>
<text transform="translate(977.20 114.35) scale(0.84 1.36)" font-size="8.6" x="0.54 6.39 13.45 18.11 23.97 29.82" fill="#000" font-weight="bold" xml:space="preserve">23,101</text>
<rect x="5.5" y="204.7" width="1011.1" height="178.10000000000002" fill="#1b1b1b"/>
<rect x="5.5" y="204.7" width="963.5" height="165.3" fill="#000"/>
<clipPath id="c1"><rect x="6" y="205.2" width="963" height="164.8"/></clipPath>
<g clip-path="url(#c1)" fill="none" stroke="#fff"><path d="M6 222.4H969M6 249.8H969M6 277.1H969M6 304.5H969M6 331.8H969M6 359.2H969" stroke-width="2.2" stroke-opacity="0.09"/><path d="M6 222.4H969M6 249.8H969M6 277.1H969M6 304.5H969M6 331.8H969M6 359.2H969" stroke-width="1" stroke-opacity="0.12"/><path d="M6 222.4H969M6 249.8H969M6 277.1H969M6 304.5H969M6 331.8H969M6 359.2H969" stroke-width="1" stroke-opacity="0.26" stroke-dasharray="1.3 1.3"/><path d="M35.5 205.2V370.0M83.75 205.2V370.0M132 205.2V370.0M180.25 205.2V370.0M228.5 205.2V370.0M276.5 205.2V370.0M324.75 205.2V370.0M355.5 205.2V370.0M404 205.2V370.0M452.25 205.2V370.0M500.5 205.2V370.0M548.75 205.2V370.0M594.75 205.2V370.0M643 205.2V370.0M691.25 205.2V370.0M739 205.2V370.0M787.5 205.2V370.0M835 205.2V370.0M882.5 205.2V370.0M928.75 205.2V370.0M23.75 205.2V370.0M691.25 205.2V370.0" stroke-width="2.2" stroke-opacity="0.08"/><path d="M35.5 205.2V370.0M83.75 205.2V370.0M132 205.2V370.0M180.25 205.2V370.0M228.5 205.2V370.0M276.5 205.2V370.0M324.75 205.2V370.0M355.5 205.2V370.0M404 205.2V370.0M452.25 205.2V370.0M500.5 205.2V370.0M548.75 205.2V370.0M594.75 205.2V370.0M643 205.2V370.0M691.25 205.2V370.0M739 205.2V370.0M787.5 205.2V370.0M835 205.2V370.0M882.5 205.2V370.0M928.75 205.2V370.0M23.75 205.2V370.0M691.25 205.2V370.0" stroke-width="1" stroke-opacity="0.09"/><path d="M35.5 205.2V370.0M83.75 205.2V370.0M132 205.2V370.0M180.25 205.2V370.0M228.5 205.2V370.0M276.5 205.2V370.0M324.75 205.2V370.0M355.5 205.2V370.0M404 205.2V370.0M452.25 205.2V370.0M500.5 205.2V370.0M548.75 205.2V370.0M594.75 205.2V370.0M643 205.2V370.0M691.25 205.2V370.0M739 205.2V370.0M787.5 205.2V370.0M835 205.2V370.0M882.5 205.2V370.0M928.75 205.2V370.0M23.75 205.2V370.0M691.25 205.2V370.0" stroke-width="1" stroke-opacity="0.22" stroke-dasharray="1.3 1.3"/></g>
<g clip-path="url(#c1)"><path d="M8.8 215.3V217.2M9.6 216.8V217.8M24.1 214.6V218.1M24.9 217.1V220.3M25.7 219.3V223.0M26.5 222.5V226.2M27.3 225.5V228.6M28.1 227.7V228.7M29.7 227.4V228.4M30.5 227.9V231.0M31.3 230.3V232.2M32.1 231.4V232.6M32.9 231.9V233.7M38.5 236.5V239.2M39.3 238.7V240.0M41.7 241.8V243.3M42.5 242.9V244.5M44.1 244.0V245.5M47.3 239.9V242.1M48.1 241.9V244.0M48.9 243.2V245.0M49.7 244.9V246.3M50.5 245.7V246.7M57.8 241.3V242.3M59.4 241.7V242.8M61.8 242.3V243.3M62.6 242.9V245.2M63.4 244.6V247.7M64.2 247.6V252.5M65.0 251.9V259.4M65.8 258.8V262.5M66.6 261.5V263.7M69.0 258.5V260.0M73.8 255.8V257.7M74.6 257.2V258.7M77.0 256.7V260.7M78.6 262.6V263.6M83.4 256.1V258.2M84.2 257.6V264.4M93.9 240.2V241.2M99.5 234.3V236.4M101.1 235.5V237.8M101.9 236.9V238.9M102.7 238.2V240.4M103.5 239.4V242.2M104.3 241.5V242.5M105.9 244.2V246.1M106.7 245.8V247.2M113.1 241.4V243.3M117.1 240.5V241.9M120.4 240.8V243.0M122.0 242.1V244.8M125.2 246.9V249.2M126.0 248.4V249.7M126.8 249.1V250.1M130.0 247.9V250.0M130.8 249.0V250.7M131.6 249.8V252.0M132.4 251.0V254.3M133.2 253.7V254.7M134.0 254.0V255.2M142.0 236.6V238.4M142.8 238.4V240.4M143.6 239.8V241.6M146.8 237.8V239.2M150.0 237.5V239.6M150.9 238.8V240.2M151.7 239.7V241.5M154.1 238.3V241.0M154.9 240.5V242.9M155.7 242.6V243.8M156.5 243.5V246.4M157.3 245.6V246.6M158.1 246.2V247.9M160.5 247.5V249.9M162.9 250.7V252.9M164.5 253.7V255.9M165.3 255.3V257.8M166.1 257.3V258.4M167.7 259.0V261.2M168.5 260.1V263.1M169.3 262.6V267.9M170.1 267.5V269.5M170.1 266.4V267.4M174.1 264.5V266.1M174.9 265.5V266.9M175.7 266.4V269.5M199.0 261.6V263.0M199.8 262.7V263.7M201.4 263.5V266.3M204.6 263.8V264.8M205.4 264.0V265.0M206.2 264.6V266.4M207.0 265.8V267.0M207.8 266.4V267.4M208.6 267.0V269.1M209.4 268.7V270.1M210.2 269.9V272.6M211.0 271.6V274.0M212.6 273.5V275.7M213.4 274.5V277.0M214.2 276.2V278.2M224.7 272.9V273.9M229.5 269.6V271.0M230.3 270.8V271.9M231.1 271.2V272.7M239.1 270.8V271.8M249.6 266.6V268.5M250.4 267.9V269.5M251.2 268.8V269.8M252.8 269.6V271.0M253.6 270.2V271.4M254.4 271.1V273.6M255.2 272.8V275.0M256.0 274.8V277.4M258.4 273.8V274.8M259.2 274.2V275.2M260.0 274.9V276.8M262.4 276.3V277.3M264.0 276.7V277.8M264.8 277.1V279.3M265.6 278.5V279.8M267.2 278.4V279.4M268.0 278.9V280.3M270.4 278.9V279.9M271.2 279.2V281.4M279.3 270.2V271.6M283.3 269.2V270.9M284.1 270.5V271.6M287.3 268.3V269.4M289.7 267.7V270.0M290.5 269.2V271.1M292.1 270.8V272.1M292.9 271.3V274.1M293.7 273.4V276.0M294.5 275.4V277.7M295.3 277.0V278.7M296.1 278.2V279.5M300.9 282.1V283.9M301.7 282.7V284.3M302.5 283.4V285.8M303.3 285.3V286.3M308.1 277.6V279.1M308.9 278.2V281.4M310.5 282.4V284.7M312.2 284.7V285.7M313.0 284.9V289.3M313.8 288.8V290.9M317.8 291.8V294.1M318.6 293.9V297.2M329.0 305.3V309.0M329.8 308.4V311.4M330.6 310.2V314.7M331.4 314.0V315.2M332.2 314.7V317.2M333.0 316.9V318.8M334.6 319.6V322.6M335.4 321.9V325.4M337.8 324.1V325.1M339.4 325.0V326.7M340.2 326.3V327.3M342.6 327.9V331.0M344.3 332.3V335.7M345.1 335.0V337.4M346.7 339.8V345.2M347.5 344.4V350.4M348.3 349.6V355.6M349.1 355.2V358.1M365.1 305.2V306.5M365.9 305.9V307.5M366.7 306.8V308.9M368.3 308.0V310.3M369.9 310.8V312.8M376.4 306.8V307.8M378.0 308.8V310.5M379.6 309.5V310.8M382.8 300.1V301.1M392.4 299.9V301.3M393.2 300.3V302.0M394.0 301.3V303.0M394.8 302.2V304.8M395.6 303.9V304.9M401.2 306.0V307.0M404.4 306.9V309.0M405.2 308.2V309.7M406.0 309.0V310.0M410.1 306.5V307.9M417.3 304.2V305.5M418.1 305.1V308.7M418.9 308.3V309.4M419.7 308.8V311.5M429.3 307.5V308.5M430.1 307.7V311.0M430.9 310.8V313.2M431.7 312.4V314.5M432.5 313.7V316.3M433.3 315.1V317.7M434.9 318.7V320.9M437.3 320.7V322.6M438.9 321.5V323.0M447.8 319.0V320.7M476.7 318.1V319.9M486.3 321.5V323.0M492.7 314.4V315.6M502.3 303.7V304.9M513.6 270.0V273.3M523.2 278.3V280.8M529.6 266.1V267.7M532.0 267.6V269.0M533.6 269.5V273.2M535.2 273.4V274.8M536.9 272.8V274.3M537.7 273.7V276.1M538.5 275.2V278.8M540.1 277.9V279.1M540.9 279.0V280.6M548.9 282.3V283.5M549.7 283.2V285.1M552.1 284.3V286.4M577.8 265.5V270.2M580.2 264.9V266.3M581.0 265.4V268.8M591.4 255.7V256.9M593.0 255.9V257.0M593.8 256.8V258.5M599.4 265.6V267.9M601.9 267.2V268.4M604.3 268.8V270.1M608.3 266.5V268.2M610.7 267.1V269.4M611.5 268.7V270.6M625.9 272.3V273.5M626.7 273.3V275.6M629.9 267.6V270.8M667.7 256.6V257.6M679.7 255.5V257.3M703.0 255.0V256.5M703.8 256.2V258.0M707.0 259.6V261.1M735.9 278.6V284.9M737.5 284.5V287.4M739.1 286.4V288.0M746.3 282.6V284.4M841.3 276.4V277.6M934.7 272.7V273.9M965.8 269.4V270.6" stroke="#0a72e0" stroke-width="1.25" fill="none"/><path d="M23.3 214.7V215.7M28.9 227.1V228.6M35.3 230.3V231.6M45.7 242.9V245.4M46.5 240.3V243.6M55.4 242.3V243.5M60.2 241.9V242.9M67.4 259.3V263.4M68.2 258.6V259.6M69.8 258.9V260.3M72.2 256.2V259.0M73.0 255.6V257.2M75.4 257.6V258.7M76.2 256.5V258.1M79.4 261.8V263.4M80.2 259.4V262.4M81.8 258.0V260.4M82.6 256.3V258.7M85.8 264.4V265.5M86.7 259.7V264.7M87.5 253.2V260.3M89.1 243.7V248.4M89.9 240.9V244.3M90.7 239.3V241.3M91.5 239.0V240.5M93.1 240.0V241.0M94.7 239.6V241.0M95.5 239.3V240.6M96.3 238.7V240.1M97.1 237.0V239.3M98.7 234.4V236.7M107.5 246.0V247.5M109.1 243.0V246.3M109.9 241.4V243.5M113.9 242.2V243.3M116.3 240.6V242.6M117.9 240.6V241.6M122.8 243.9V244.9M127.6 249.1V250.1M128.4 247.7V249.6M134.8 252.1V255.1M135.6 250.8V252.8M137.2 241.8V243.2M138.0 241.6V242.6M138.8 239.1V242.5M139.6 237.8V239.8M140.4 237.1V238.1M141.2 236.4V237.4M144.4 240.6V241.6M145.2 238.7V241.2M146.0 237.8V239.1M147.6 238.7V239.7M149.2 237.9V239.5M152.5 240.7V241.8M153.3 238.1V240.9M170.9 265.3V267.2M172.5 264.9V265.9M173.3 264.4V265.4M177.3 266.9V269.2M178.1 265.4V267.5M178.9 264.7V266.0M180.5 264.6V265.6M181.3 263.7V265.3M182.1 263.0V264.2M183.8 262.4V263.4M184.6 261.8V263.3M186.2 260.9V262.3M191.0 264.7V266.2M192.6 264.5V265.8M194.2 264.2V265.2M195.0 263.5V264.9M195.8 263.5V264.5M196.6 262.1V264.2M198.2 261.4V262.5M202.2 265.3V266.5M203.0 263.8V266.1M215.1 277.2V278.2M216.7 275.3V277.0M217.5 274.1V275.7M219.1 272.7V274.3M220.7 271.0V272.6M227.1 272.3V273.7M227.9 271.3V273.2M228.7 269.5V272.0M231.9 271.6V272.7M234.3 270.9V272.0M235.9 269.9V271.1M237.5 269.2V270.7M240.7 271.0V272.0M241.5 269.0V271.4M243.1 268.1V269.1M243.9 267.5V268.5M245.5 266.4V268.5M247.2 266.1V267.2M256.8 275.1V277.5M257.6 273.7V275.6M266.4 278.6V279.8M269.6 279.0V280.3M275.2 274.4V275.4M276.0 272.5V274.6M276.8 271.9V273.6M277.6 270.4V272.6M280.1 270.2V272.1M280.9 269.8V271.1M281.7 269.6V270.7M282.5 269.0V270.0M284.9 270.4V271.7M286.5 268.0V269.6M288.9 267.8V269.4M305.7 279.8V282.7M306.5 277.8V280.1M349.9 355.7V357.8M350.7 352.4V356.2M351.5 350.1V353.1M352.3 346.8V350.7M353.1 343.0V347.3M356.3 321.1V324.0M357.1 317.0V321.7M357.9 313.9V317.5M358.7 312.1V314.9M360.3 307.5V311.1M361.1 306.3V308.2M361.9 305.1V306.5M364.3 305.4V306.4M367.5 308.0V309.0M371.5 311.9V313.1M373.9 309.6V310.9M374.7 308.4V310.1M378.8 309.8V310.8M388.4 303.4V304.7M389.2 302.3V304.0M390.0 301.9V302.9M391.6 299.9V302.4M397.2 304.1V305.4M399.6 303.3V304.4M406.8 308.1V310.3M407.7 307.5V309.0M414.9 303.7V304.8M420.5 309.9V310.9M421.3 308.8V310.4M422.1 308.1V309.7M422.9 306.8V308.6M428.5 307.4V309.8M439.8 321.8V323.1M440.6 320.2V322.1M441.4 319.0V321.1M442.2 317.9V319.6M443.8 316.8V318.0M487.1 320.8V322.9M488.7 320.9V321.9M491.1 319.3V320.6M496.7 310.9V314.1M501.5 303.7V304.8M505.6 291.5V298.9M506.4 287.9V292.0M507.2 285.1V288.9M508.8 275.4V279.9M509.6 273.9V276.2M510.4 271.9V274.6M512.0 269.7V272.2M514.4 269.8V273.0M515.2 266.3V269.9M519.2 279.4V280.4M524.0 279.2V280.6M527.2 266.2V268.4M528.8 266.0V267.2M536.1 273.3V274.7M541.7 278.8V280.3M543.3 276.4V279.3M544.1 273.8V277.2M561.7 279.3V283.1M567.3 272.1V274.1M568.2 271.0V272.4M569.0 269.9V271.5M569.8 268.6V270.2M577.0 265.9V267.9M581.8 266.2V268.5M585.8 257.3V259.5M588.2 255.8V257.3M604.3 264.8V267.3M603.5 268.7V270.3M624.3 272.2V274.2M634.0 268.9V270.3M642.8 266.5V268.4M643.6 265.5V267.0M644.4 264.8V266.2M645.2 263.5V264.9M660.4 253.5V256.4M682.1 255.5V256.5M699.0 252.9V255.3M728.7 277.7V278.7M740.7 281.7V283.8M741.5 279.7V282.3M808.3 272.4V273.6M872.5 266.1V267.3M889.7 269.4V270.6" stroke="#e00000" stroke-width="1.25" fill="none"/><path d="M40.9 241.3V242.3M44.9 244.5V245.5M51.3 246.0V247.0M52.1 246.1V247.1M54.6 242.8V243.8M57.0 241.2V242.2M58.6 241.8V242.8M61.0 241.8V242.9M81.0 259.5V260.5M100.3 235.4V236.5M108.3 246.0V247.0M110.7 241.5V242.5M111.5 241.5V242.5M112.3 241.6V242.6M115.5 241.3V242.3M118.8 240.7V241.7M119.6 240.6V241.6M121.2 242.0V243.0M129.2 247.8V248.8M136.4 242.2V243.2M148.4 238.6V239.6M159.7 247.8V248.8M162.1 250.3V251.3M171.7 265.1V266.1M176.5 268.6V269.6M179.7 264.8V265.8M183.0 262.5V263.8M185.4 261.1V262.1M187.0 260.5V261.5M191.8 264.7V265.7M197.4 261.7V262.7M200.6 263.1V264.1M203.8 263.3V264.4M211.8 273.1V274.1M218.3 273.7V274.7M221.5 270.6V271.6M225.5 272.9V273.9M226.3 273.1V274.1M233.5 271.0V272.0M235.1 270.5V271.5M246.3 266.4V267.4M248.0 266.0V267.0M248.8 266.0V267.0M252.0 269.2V270.2M260.8 276.1V277.1M261.6 276.0V277.0M268.8 279.7V280.7M288.1 268.5V269.5M291.3 270.5V271.5M296.9 278.9V279.9M307.3 277.4V278.4M337.0 324.2V325.2M341.0 326.7V327.9M355.5 323.4V324.4M362.7 304.9V305.9M386.0 303.8V304.8M386.8 303.9V304.9M387.6 303.9V304.9M390.8 301.8V302.8M398.0 304.0V305.0M403.6 307.0V308.0M408.5 307.2V308.2M414.1 303.8V305.0M416.5 304.1V305.1M426.9 309.3V310.3M435.7 320.4V321.4M438.1 321.5V322.5M461.4 319.6V320.6M463.8 321.7V322.7M464.6 321.5V322.5M472.7 315.6V316.6M484.7 321.9V323.0M485.5 321.3V322.3M487.9 320.7V322.2M489.5 320.2V321.2M495.9 312.9V313.9M497.5 310.5V311.6M503.1 303.9V305.2M512.8 269.6V270.6M522.4 277.9V278.9M526.4 266.9V268.4M528.0 266.0V267.2M546.5 279.3V280.3M550.5 284.6V285.6M551.3 284.4V285.4M552.9 285.4V286.4M560.9 282.2V283.5M564.9 273.0V274.0M565.7 273.4V274.4M566.5 273.1V274.1M576.2 267.1V268.1M585.0 258.6V259.6M586.6 257.3V258.4M589.0 255.3V256.3M589.8 255.1V256.1M597.8 264.7V265.7M598.6 265.1V266.1M601.1 266.6V267.6M605.1 264.3V265.3M609.1 267.3V268.3M622.7 273.6V274.7M623.5 273.7V274.7M625.1 272.1V273.1M628.3 267.4V268.4M629.1 267.4V268.4M631.5 269.2V270.4M632.4 268.9V270.0M638.0 263.8V264.8M640.4 270.1V271.4M654.8 265.4V266.4M655.6 265.4V266.4M658.0 257.1V258.1M666.1 255.7V256.7M672.5 258.6V259.7M687.7 255.3V256.3M698.2 254.5V255.5M699.8 252.3V253.3M704.6 257.2V258.2M706.2 259.1V260.1M710.2 259.1V260.1M711.8 259.5V260.5M712.6 259.6V260.6M720.6 266.2V267.3M721.4 266.2V267.2M727.8 277.4V279.0M729.5 277.3V278.3M731.1 276.7V277.7M733.5 280.5V281.5M736.7 284.1V285.1M748.7 283.5V284.5M755.9 286.6V287.6M756.7 286.8V288.0M790.8 275.7V276.9M807.5 274.1V275.3M810.0 273.6V274.8M811.7 272.7V273.9M815.8 269.1V270.3M818.7 272.7V273.9M816.3 269.1V270.3M819.2 272.7V273.9M824.2 272.7V273.9M857.5 271.9V273.1M862.5 269.4V270.6M867.0 267.7V268.9M876.7 266.9V268.1M935.8 272.7V273.9M959.7 268.6V269.8M964.2 271.1V272.3M967.0 271.9V273.1" stroke="#d4ca58" stroke-width="1.25" fill="none"/></g>
<g clip-path="url(#c1)"><text x="5.00" y="215.29999999999998" font-size="9.84" fill="#cfcfcf">時刻</text><text transform="translate(24.68 215.7) scale(0.84 1.36)" font-size="8.6" x="1.73 6.39 12.25 19.30 23.97 29.82 36.88" fill="#cfcfcf" xml:space="preserve">:06:00 </text><text x="59.12" y="215.29999999999998" font-size="9.84" fill="#cfcfcf">始値</text><text transform="translate(78.80 215.7) scale(0.84 1.36)" font-size="8.6" x="1.73 6.39 13.45 18.11 23.97 29.82 36.88" fill="#cfcfcf" xml:space="preserve">:9,300 </text><text x="113.24" y="215.29999999999998" font-size="9.84" fill="#cfcfcf">高値</text><text transform="translate(132.92 215.7) scale(0.84 1.36)" font-size="8.6" x="1.73 6.39 13.45 18.11 23.97 29.82 36.88" fill="#cfcfcf" xml:space="preserve">:9,300 </text><text x="167.36" y="215.29999999999998" font-size="9.84" fill="#cfcfcf">安値</text><text transform="translate(187.04 215.7) scale(0.84 1.36)" font-size="8.6" x="1.73 6.39 13.45 18.11 23.97 29.82 36.88" fill="#cfcfcf" xml:space="preserve">:9,300 </text><text x="221.48" y="215.29999999999998" font-size="9.84" fill="#cfcfcf">終値</text><text transform="translate(241.16 215.7) scale(0.84 1.36)" font-size="8.6" x="1.73 6.39 13.45 18.11 23.97 29.82" fill="#cfcfcf" xml:space="preserve">:9,300</text></g>
<path d="M5.5 370.4H969.4V204.7" stroke="#b0b0b0" stroke-width="1.4" fill="none"/>
<g fill="#bdbdbd"><text transform="translate(10.60 378.1) scale(0.84 1.36)" font-size="8.6" x="0.54 6.39" xml:space="preserve">08</text><text transform="translate(36.00 378.1) scale(0.84 1.36)" font-size="8.6" x="0.54 6.39" xml:space="preserve">09</text><text transform="translate(84.25 378.1) scale(0.84 1.36)" font-size="8.6" x="0.54 6.39" xml:space="preserve">10</text><text transform="translate(132.50 378.1) scale(0.84 1.36)" font-size="8.6" x="0.54 6.39" xml:space="preserve">11</text><text transform="translate(180.75 378.1) scale(0.84 1.36)" font-size="8.6" x="0.54 6.39" xml:space="preserve">12</text><text transform="translate(229.00 378.1) scale(0.84 1.36)" font-size="8.6" x="0.54 6.39" xml:space="preserve">13</text><text transform="translate(277.00 378.1) scale(0.84 1.36)" font-size="8.6" x="0.54 6.39" xml:space="preserve">14</text><text transform="translate(325.25 378.1) scale(0.84 1.36)" font-size="8.6" x="0.54 6.39" xml:space="preserve">15</text><text transform="translate(356.00 378.1) scale(0.84 1.36)" font-size="8.6" x="0.54 6.39" xml:space="preserve">17</text><text transform="translate(404.50 378.1) scale(0.84 1.36)" font-size="8.6" x="0.54 6.39" xml:space="preserve">18</text><text transform="translate(452.75 378.1) scale(0.84 1.36)" font-size="8.6" x="0.54 6.39" xml:space="preserve">19</text><text transform="translate(501.00 378.1) scale(0.84 1.36)" font-size="8.6" x="0.54 6.39" xml:space="preserve">20</text><text transform="translate(549.25 378.1) scale(0.84 1.36)" font-size="8.6" x="0.54 6.39" xml:space="preserve">21</text><text transform="translate(595.25 378.1) scale(0.84 1.36)" font-size="8.6" x="0.54 6.39" xml:space="preserve">22</text><text transform="translate(643.50 378.1) scale(0.84 1.36)" font-size="8.6" x="0.54 6.39" xml:space="preserve">23</text><text transform="translate(691.75 378.1) scale(0.84 1.36)" font-size="8.6" x="0.54 6.39" xml:space="preserve">00</text><text transform="translate(739.50 378.1) scale(0.84 1.36)" font-size="8.6" x="0.54 6.39" xml:space="preserve">01</text><text transform="translate(788.00 378.1) scale(0.84 1.36)" font-size="8.6" x="0.54 6.39" xml:space="preserve">02</text><text transform="translate(835.50 378.1) scale(0.84 1.36)" font-size="8.6" x="0.54 6.39" xml:space="preserve">03</text><text transform="translate(883.00 378.1) scale(0.84 1.36)" font-size="8.6" x="0.54 6.39" xml:space="preserve">04</text><text transform="translate(929.25 378.1) scale(0.84 1.36)" font-size="8.6" x="0.54 6.39" xml:space="preserve">05</text><text transform="translate(954.60 378.1) scale(0.84 1.36)" font-size="8.6" x="0.54 6.39" xml:space="preserve">06</text><text transform="translate(24.45 366.3) scale(0.84 1.36)" font-size="8.6" x="0.54 6.39" xml:space="preserve">23</text><text transform="translate(691.95 366.3) scale(0.84 1.36)" font-size="8.6" x="0.54 6.39" xml:space="preserve">24</text><text transform="translate(969.60 220.4) scale(0.84 1.36)" font-size="8.6" x="0.54 7.59 12.25 18.11 23.97" xml:space="preserve">9,750</text><text transform="translate(969.60 247.8) scale(0.84 1.36)" font-size="8.6" x="0.54 7.59 12.25 18.11 23.97" xml:space="preserve">9,500</text><text transform="translate(969.60 302.5) scale(0.84 1.36)" font-size="8.6" x="0.54 7.59 12.25 18.11 23.97" xml:space="preserve">9,000</text><text transform="translate(969.60 329.8) scale(0.84 1.36)" font-size="8.6" x="0.54 7.59 12.25 18.11 23.97" xml:space="preserve">8,750</text><text transform="translate(969.60 357.2) scale(0.84 1.36)" font-size="8.6" x="0.54 7.59 12.25 18.11 23.97" xml:space="preserve">8,500</text><text transform="translate(969.60 384.5) scale(0.84 1.36)" font-size="8.6" x="0.54 7.59 12.25 18.11 23.97" xml:space="preserve">8,250</text></g>
<rect x="969.7" y="264" width="46.39999999999998" height="17" fill="#dcdcdc"/>
<text transform="translate(979.80 275.1) scale(0.84 1.36)" font-size="8.6" x="0.54 7.59 12.25 18.11 23.97" fill="#000" font-weight="bold" xml:space="preserve">9,300</text>
<rect x="5.5" y="385.9" width="1011.1" height="159.80000000000007" fill="#1b1b1b"/>
<rect x="5.5" y="385.9" width="963.5" height="147.5" fill="#000"/>
<clipPath id="c2"><rect x="6" y="386.4" width="963" height="147.0"/></clipPath>
<g clip-path="url(#c2)" fill="none" stroke="#fff"><path d="M6 399.9H969M6 431.2H969M6 462.5H969M6 493.8H969M6 525.2H969" stroke-width="2.2" stroke-opacity="0.09"/><path d="M6 399.9H969M6 431.2H969M6 462.5H969M6 493.8H969M6 525.2H969" stroke-width="1" stroke-opacity="0.12"/><path d="M6 399.9H969M6 431.2H969M6 462.5H969M6 493.8H969M6 525.2H969" stroke-width="1" stroke-opacity="0.26" stroke-dasharray="1.3 1.3"/><path d="M35.5 386.4V533.4M83.75 386.4V533.4M132 386.4V533.4M180.25 386.4V533.4M228.5 386.4V533.4M276.5 386.4V533.4M324.75 386.4V533.4M355.5 386.4V533.4M404 386.4V533.4M452.25 386.4V533.4M500.5 386.4V533.4M548.75 386.4V533.4M594.75 386.4V533.4M643 386.4V533.4M691.25 386.4V533.4M739 386.4V533.4M787.5 386.4V533.4M835 386.4V533.4M882.5 386.4V533.4M928.75 386.4V533.4M23.75 386.4V533.4M691.25 386.4V533.4" stroke-width="2.2" stroke-opacity="0.08"/><path d="M35.5 386.4V533.4M83.75 386.4V533.4M132 386.4V533.4M180.25 386.4V533.4M228.5 386.4V533.4M276.5 386.4V533.4M324.75 386.4V533.4M355.5 386.4V533.4M404 386.4V533.4M452.25 386.4V533.4M500.5 386.4V533.4M548.75 386.4V533.4M594.75 386.4V533.4M643 386.4V533.4M691.25 386.4V533.4M739 386.4V533.4M787.5 386.4V533.4M835 386.4V533.4M882.5 386.4V533.4M928.75 386.4V533.4M23.75 386.4V533.4M691.25 386.4V533.4" stroke-width="1" stroke-opacity="0.09"/><path d="M35.5 386.4V533.4M83.75 386.4V533.4M132 386.4V533.4M180.25 386.4V533.4M228.5 386.4V533.4M276.5 386.4V533.4M324.75 386.4V533.4M355.5 386.4V533.4M404 386.4V533.4M452.25 386.4V533.4M500.5 386.4V533.4M548.75 386.4V533.4M594.75 386.4V533.4M643 386.4V533.4M691.25 386.4V533.4M739 386.4V533.4M787.5 386.4V533.4M835 386.4V533.4M882.5 386.4V533.4M928.75 386.4V533.4M23.75 386.4V533.4M691.25 386.4V533.4" stroke-width="1" stroke-opacity="0.22" stroke-dasharray="1.3 1.3"/></g>
<g clip-path="url(#c2)"><path d="M6.0 405.0L6.0 405.2L6.9 405.0L7.8 404.7L8.5 403.8L8.7 404.4L9.6 403.3L10.5 402.8L11.0 401.7L11.4 401.3L12.3 403.2L13.2 405.1L13.5 404.7L14.1 405.5L15.0 406.8L15.9 406.4L16.0 407.2L16.8 407.8L17.7 408.2L18.5 409.3L18.6 409.4L19.5 409.2L20.4 408.1L20.7 408.8L21.3 407.8L22.2 407.2L22.7 407.2L23.1 406.5L24.0 403.5L24.0 403.0L24.7 393.8L24.9 397.5L25.2 403.0L25.7 423.0L25.8 424.6L26.7 430.5L26.8 432.2L27.6 430.1L28.5 426.5L28.5 427.2L29.4 428.4L30.3 432.0L30.7 432.2L31.2 430.1L32.1 427.5L32.7 426.3L33.0 427.4L33.9 428.0L34.7 428.0L34.8 427.2L35.7 425.7L36.3 423.0L36.6 424.1L37.5 427.7L37.7 428.0L38.4 430.8L39.3 436.1L39.3 435.5L40.2 440.2L40.7 442.2L41.1 439.1L42.0 430.8L42.3 427.2L42.9 428.0L43.8 429.9L44.0 430.5L44.7 428.9L45.6 427.5L45.7 428.0L46.5 431.4L47.3 436.3L47.4 436.6L48.3 444.8L48.5 446.3L49.2 445.8L50.1 447.4L50.2 447.2L51.0 440.9L51.3 438.8L51.9 437.9L52.8 437.9L53.0 437.2L53.7 435.9L54.6 434.1L54.7 434.3L55.5 432.6L56.4 431.1L56.5 430.5L57.3 432.7L58.2 437.7L58.5 438.0L59.1 436.6L60.0 437.0L60.7 436.0L60.9 436.8L61.8 436.3L62.7 438.0L62.7 438.6L63.6 441.3L64.0 443.0L64.5 453.1L64.7 456.3L65.4 466.5L65.7 471.3L66.3 474.2L66.8 478.0L67.2 474.8L68.0 469.7L68.1 470.1L69.0 466.2L69.7 464.7L69.9 465.0L70.8 465.0L71.7 464.6L71.8 463.8L72.6 464.7L73.5 466.1L73.5 466.3L74.4 465.0L75.2 463.8L75.3 464.2L76.2 462.7L76.8 463.0L77.1 466.6L77.7 473.0L78.0 476.3L78.7 481.3L78.9 480.9L79.8 475.5L80.2 474.7L80.7 473.6L81.6 469.0L81.8 468.8L82.5 464.8L83.0 462.2L83.4 465.6L84.3 473.4L84.3 473.0L85.2 462.4L85.7 457.2L86.1 459.6L87.0 462.6L87.3 463.8L87.9 462.1L88.8 459.9L89.0 459.7L89.7 459.7L90.6 460.3L91.0 461.3L91.5 458.7L92.4 456.1L92.7 454.7L93.3 453.0L94.2 448.0L94.3 448.0L95.1 448.0L96.0 449.7L96.0 450.5L96.9 445.2L97.3 443.0L97.8 443.5L98.7 444.6L99.0 445.5L99.6 444.8L100.5 443.8L100.7 443.0L101.4 445.0L101.8 446.3L102.3 438.3L102.7 432.2L103.2 432.7L104.1 436.5L104.3 436.3L105.0 437.2L105.7 439.7L105.9 439.1L106.8 437.4L107.7 434.7L107.7 433.9L108.6 432.3L109.5 430.1L109.7 428.8L110.4 426.5L111.3 423.6L111.3 423.0L112.2 427.2L112.7 430.5L113.1 428.2L114.0 423.2L114.3 422.2L114.9 423.6L115.8 424.0L116.0 424.7L116.7 426.9L117.6 430.8L118.0 431.3L118.5 432.7L119.4 434.3L120.2 434.7L120.3 434.6L121.2 435.0L122.1 435.8L122.3 435.5L123.0 436.3L123.9 437.1L124.3 438.0L124.8 438.0L125.7 438.0L126.3 438.8L126.6 438.4L127.5 438.5L128.0 437.2L128.4 439.3L129.3 441.9L129.7 443.0L130.2 445.3L131.0 448.8L131.1 448.6L132.0 448.1L132.9 448.4L133.0 448.8L133.8 438.0L134.0 434.7L134.7 431.3L134.7 432.1L135.6 435.2L136.0 437.2L136.5 438.9L137.4 441.1L137.7 441.3L138.3 444.5L139.2 448.5L139.3 448.8L140.1 452.0L141.0 454.7L141.0 454.4L141.9 458.0L142.8 460.3L143.0 461.3L143.7 458.5L144.6 455.4L144.7 454.7L145.5 453.4L146.0 452.2L146.4 454.1L147.3 460.2L147.3 459.7L148.2 456.9L149.0 453.8L149.1 453.9L150.0 452.6L150.9 453.1L151.0 453.0L151.8 452.4L152.7 452.7L152.7 452.8L153.6 448.2L153.7 448.0L154.5 454.8L154.7 455.5L155.4 458.0L156.0 459.7L156.3 459.6L157.2 457.0L157.7 456.3L158.1 457.7L159.0 460.1L159.3 460.5L159.9 460.3L160.8 458.4L161.3 458.0L161.7 459.7L162.6 462.6L162.7 462.2L163.5 461.4L164.4 460.8L164.7 459.7L165.3 458.5L166.2 455.1L166.3 454.7L167.1 452.1L168.0 448.3L168.5 447.2L168.9 446.7L169.8 444.6L170.0 443.3L170.7 444.3L171.6 446.1L171.7 445.8L172.5 447.3L173.4 448.5L174.2 449.2L174.3 448.9L175.2 452.0L176.1 453.8L176.3 454.2L177.0 453.9L177.9 452.7L178.3 452.5L178.8 453.7L179.7 455.8L180.3 456.7L180.6 455.7L181.5 451.8L182.0 449.2L182.4 448.7L183.3 449.6L184.2 450.8L184.2 450.7L185.1 451.6L185.8 451.7L186.0 451.9L186.9 456.2L187.5 458.3L187.8 459.5L188.7 461.2L189.2 463.3L189.6 464.4L190.5 466.2L190.8 467.5L191.4 464.2L192.3 460.3L192.5 460.0L193.2 457.6L194.1 454.7L194.2 455.0L195.0 458.1L195.3 460.0L195.9 456.2L196.7 453.0L196.8 453.5L197.7 457.1L198.3 460.0L198.6 460.5L199.5 461.6L200.3 462.5L200.4 462.0L201.3 463.0L202.2 461.2L202.5 462.0L203.1 462.2L204.0 462.5L204.2 463.0L204.9 459.3L205.8 454.5L205.8 455.0L206.7 459.3L207.0 460.0L207.6 458.3L208.5 455.5L208.7 455.8L209.4 456.9L210.3 457.0L210.8 458.3L211.2 458.7L212.1 459.0L213.0 460.0L213.0 460.1L213.9 461.6L214.8 462.1L215.3 462.0L215.7 461.5L216.6 461.4L217.5 460.0L217.5 460.2L218.4 458.9L219.3 457.7L219.7 458.0L220.2 457.9L221.1 457.4L221.7 457.0L222.0 457.8L222.9 457.8L223.8 457.2L224.2 457.0L224.7 456.6L225.6 457.3L226.5 455.5L226.7 456.3L227.4 453.7L228.3 452.0L228.7 450.8L229.2 451.6L230.1 451.9L230.8 453.3L231.0 453.1L231.9 451.3L232.5 449.2L232.8 448.8L233.7 448.4L234.6 447.6L234.7 448.0L235.5 448.3L236.4 450.2L236.7 449.7L237.3 449.0L238.2 449.4L238.7 448.3L239.1 449.4L240.0 449.5L240.8 450.0L240.9 449.5L241.8 449.1L242.5 447.0L242.7 447.2L243.6 448.0L244.5 448.7L244.7 449.2L245.4 450.6L246.3 450.5L246.7 450.8L247.2 450.3L248.1 450.3L249.0 449.4L249.2 450.0L249.9 449.9L250.8 449.3L251.3 449.2L251.7 448.7L252.6 449.1L253.3 448.3L253.5 448.3L254.4 443.5L254.7 443.3L255.3 443.7L256.2 443.7L256.3 444.2L257.1 443.4L258.0 440.8L258.0 441.3L258.9 438.9L259.8 437.4L260.0 437.5L260.7 438.0L261.6 440.7L261.7 440.0L262.5 438.0L263.3 436.7L263.4 436.8L264.3 435.7L265.0 435.0L265.2 435.6L266.1 437.2L266.7 438.0L267.0 438.6L267.9 438.1L268.7 439.2L268.8 439.8L269.7 440.4L270.3 441.7L270.6 442.4L271.5 444.3L272.0 445.8L272.4 444.5L273.3 442.6L273.7 441.7L274.2 443.1L275.1 445.4L275.3 446.3L276.0 447.2L276.9 447.6L277.0 447.5L277.8 444.2L278.3 443.3L278.7 443.4L279.6 444.8L280.3 445.8L280.5 446.5L281.4 446.1L282.3 445.2L282.5 445.0L283.2 445.1L284.1 447.7L284.7 448.0L285.0 447.7L285.9 447.3L286.7 446.7L286.8 447.2L287.7 448.2L288.6 449.1L288.7 449.2L289.5 448.6L290.3 446.7L290.4 446.6L291.3 447.8L292.2 449.8L292.5 449.7L293.1 448.4L294.0 447.5L294.7 447.0L294.9 447.8L295.8 447.2L296.7 448.7L296.7 449.2L297.6 448.2L298.5 447.0L298.7 447.0L299.4 446.8L300.3 447.9L300.8 447.5L301.2 453.7L301.7 460.0L302.1 460.2L303.0 462.5L303.0 462.5L303.9 460.3L304.7 458.3L304.8 458.7L305.7 460.6L306.3 462.5L306.6 463.1L307.5 467.9L308.0 470.0L308.4 471.9L309.3 473.8L309.7 475.8L310.2 472.7L310.8 470.0L311.1 469.9L312.0 467.6L312.5 465.8L312.9 465.3L313.8 462.5L314.7 461.7L314.7 462.0L315.6 461.7L316.5 461.0L316.7 460.0L317.4 461.3L318.3 461.3L318.7 462.5L319.2 464.3L320.1 465.3L320.8 467.5L321.0 466.9L321.9 462.9L322.5 459.2L322.8 460.3L323.7 461.5L324.2 463.3L324.6 465.1L325.5 470.7L325.8 471.7L326.4 473.5L327.0 476.7L327.3 476.9L328.2 476.5L329.1 476.1L329.2 476.7L330.0 473.1L330.8 469.2L330.9 468.4L331.8 468.1L332.7 468.2L333.0 468.3L333.6 467.0L334.5 466.1L334.7 466.7L335.0 466.3L335.4 461.0L336.3 448.9L336.3 448.0L337.2 442.5L337.5 439.7L338.1 445.0L338.7 451.3L339.0 452.5L339.9 455.6L340.0 456.3L340.8 451.5L341.3 448.0L341.7 449.8L342.5 453.8L342.6 454.2L343.5 449.6L344.2 447.2L344.4 446.1L345.3 445.8L345.8 444.7L346.2 445.9L347.1 451.2L347.5 453.0L348.0 455.3L348.9 460.0L349.2 460.5L349.8 462.8L350.7 466.1L350.8 466.3L351.6 471.3L352.5 478.1L352.5 478.0L353.4 483.0L354.2 488.0L354.3 489.8L355.0 496.3L355.2 493.6L355.8 484.7L356.1 494.7L356.3 504.7L356.7 523.0L357.0 523.0L357.9 524.6L358.3 525.5L358.8 521.5L359.7 513.0L359.7 512.3L360.6 509.4L360.8 508.0L361.5 508.9L362.4 508.9L362.5 509.7L363.3 509.6L364.2 508.3L364.7 508.8L365.1 505.4L366.0 500.3L366.3 498.0L366.9 494.7L367.8 491.3L368.3 488.0L368.7 490.7L369.6 497.2L369.7 498.0L370.5 502.7L371.3 506.3L371.4 505.8L372.3 510.3L373.2 512.6L373.3 513.8L374.1 513.9L375.0 516.0L375.3 515.5L375.9 516.9L376.8 517.8L377.5 519.7L377.7 518.0L378.6 515.0L379.2 511.3L379.5 509.8L380.4 505.1L380.8 502.2L381.3 499.0L382.2 494.9L382.5 493.0L383.1 497.0L383.7 501.3L384.0 501.4L384.9 502.9L385.8 504.8L385.8 504.7L386.7 506.7L387.6 509.2L388.0 510.5L388.5 508.4L389.4 507.0L390.0 504.7L390.3 504.3L391.2 502.8L391.7 501.3L392.1 499.4L392.7 497.2L393.0 499.4L393.9 503.4L394.2 504.7L394.8 508.0L395.7 512.5L395.8 513.0L396.6 517.2L397.0 518.8L397.5 518.1L398.4 516.5L399.2 516.3L399.3 515.8L400.2 517.9L400.8 519.7L401.1 517.6L402.0 514.5L402.5 511.3L402.9 508.5L403.8 502.7L404.2 499.7L404.7 498.4L405.6 498.5L406.3 498.0L406.5 498.7L407.4 498.6L408.3 498.7L408.3 498.8L409.2 498.1L410.1 496.7L410.3 497.2L411.0 497.2L411.9 498.2L412.0 498.8L412.8 496.6L413.3 495.5L413.7 496.4L414.6 499.9L415.0 500.5L415.5 495.2L416.3 488.0L416.4 487.1L417.3 480.0L417.5 478.8L418.2 477.2L419.1 476.1L419.2 476.3L420.0 472.1L420.8 468.8L420.9 468.7L421.8 466.7L422.0 467.2L422.7 471.4L423.6 474.9L423.7 475.5L424.5 474.2L425.3 471.3L425.4 471.5L426.3 469.7L427.0 468.0L427.2 467.2L428.1 464.4L428.7 461.3L429.0 463.2L429.9 470.9L430.0 471.3L430.8 471.8L431.7 473.0L431.7 473.3L432.6 473.9L433.3 473.8L433.5 474.5L434.4 481.3L434.7 483.8L435.3 487.1L436.2 493.3L436.3 494.7L437.1 497.2L437.5 499.7L438.0 501.6L438.7 504.7L438.9 506.5L439.8 509.4L440.0 510.5L440.7 507.7L441.6 504.8L441.7 504.7L442.5 503.6L443.4 503.6L443.7 503.0L444.3 502.7L445.2 500.9L445.3 501.3L446.1 499.7L447.0 499.1L447.0 498.8L447.9 496.4L448.7 493.0L448.8 492.9L449.7 490.3L450.3 488.8L450.6 489.4L451.5 486.8L452.0 487.2L452.4 486.6L453.3 488.1L454.2 488.0L454.2 487.8L455.1 486.5L456.0 486.7L456.3 486.3L456.9 486.5L457.8 484.5L458.3 483.8L458.7 482.5L459.6 479.4L460.3 478.0L460.5 476.9L461.4 476.0L461.7 474.7L462.3 478.8L463.2 485.4L463.3 485.5L464.1 481.3L465.0 477.6L465.0 478.0L465.9 475.7L466.8 474.8L467.5 473.8L467.7 474.1L468.6 478.9L469.2 482.2L469.5 481.2L470.4 479.0L471.3 476.5L471.3 477.2L472.2 478.5L473.0 481.3L473.1 482.2L474.0 481.2L474.9 482.1L475.0 482.2L475.8 482.3L476.7 482.9L477.0 483.0L477.6 482.4L478.5 482.9L479.2 483.3L479.4 482.5L480.3 482.6L480.8 482.2L481.2 484.2L482.1 486.8L482.5 488.0L483.0 488.8L483.9 488.1L484.7 488.8L484.8 487.5L485.7 485.0L486.6 481.6L486.7 481.3L487.5 483.2L488.4 484.7L488.7 485.5L489.3 486.0L490.2 486.5L490.8 486.3L491.1 486.5L492.0 483.7L492.5 483.0L492.9 483.8L493.8 486.6L494.7 488.0L494.7 487.6L495.6 490.1L496.3 493.0L496.5 493.0L497.4 494.4L498.0 496.3L498.3 495.3L499.2 490.9L499.3 489.7L500.0 486.7L500.1 485.9L501.0 481.7L501.3 480.8L501.9 482.1L502.8 485.5L503.0 486.7L503.7 481.0L504.2 478.3L504.6 472.6L505.3 463.3L505.5 461.1L506.4 447.6L506.7 444.2L507.3 447.8L508.0 453.3L508.2 452.5L509.1 446.3L509.2 446.7L510.0 452.1L510.3 455.0L510.9 448.0L511.3 443.3L511.8 434.7L512.2 428.3L512.7 434.5L513.3 443.3L513.6 447.5L514.2 456.7L514.5 457.3L515.3 460.0L515.4 461.2L516.3 471.0L516.7 475.0L517.2 480.3L518.0 486.7L518.1 487.1L519.0 488.8L519.0 488.3L519.9 473.5L520.0 471.7L520.8 460.6L521.3 453.3L521.7 455.0L522.6 457.4L523.0 458.3L523.5 457.1L524.4 453.1L524.7 451.7L525.3 451.1L525.8 450.0L526.2 451.8L527.1 458.1L527.5 460.0L528.0 456.9L528.7 453.3L528.9 452.0L529.8 449.1L530.0 449.2L530.7 456.0L531.3 463.3L531.6 463.6L532.5 466.5L533.0 467.5L533.4 464.9L534.3 459.6L534.7 458.3L535.2 457.0L536.1 453.7L536.7 451.7L537.0 452.2L537.9 455.8L538.3 458.3L538.8 458.2L539.7 459.5L540.0 460.0L540.6 460.1L541.5 459.5L542.0 458.3L542.4 455.1L543.3 446.8L543.7 444.2L544.2 447.7L545.0 453.3L545.1 453.7L546.0 459.3L546.3 461.7L546.9 463.3L547.5 466.7L547.8 465.1L548.7 460.0L548.7 460.7L549.6 463.2L550.3 465.0L550.5 464.6L551.4 467.2L552.0 468.3L552.3 468.7L553.2 472.3L553.7 473.3L554.1 471.9L555.0 470.1L555.3 468.3L555.9 467.3L556.8 463.7L557.5 462.5L557.7 462.3L558.6 464.1L559.5 464.0L559.7 464.2L560.4 467.2L560.8 469.2L561.3 466.5L562.2 462.1L562.5 460.0L563.1 458.3L564.0 454.1L564.2 453.3L564.9 450.5L565.0 449.2L565.8 456.3L566.3 460.8L566.7 460.7L567.6 463.3L568.0 463.3L568.5 464.2L569.4 465.4L569.7 466.7L570.3 468.1L571.2 467.4L571.3 468.3L572.1 472.8L572.5 475.0L573.0 476.4L573.7 478.3L573.9 477.2L574.8 469.7L575.0 468.3L575.7 465.4L576.6 462.4L576.7 462.5L577.5 458.2L578.3 455.0L578.4 455.0L579.3 453.8L580.0 453.3L580.2 454.9L581.1 459.1L581.3 460.8L582.0 453.4L582.5 448.3L582.9 447.5L583.8 447.9L584.2 446.7L584.7 449.5L585.3 451.7L585.6 451.3L586.5 447.8L587.0 445.8L587.4 445.0L588.3 443.2L589.2 442.5L589.2 443.0L590.1 441.0L591.0 438.9L591.3 439.2L591.9 439.1L592.8 439.7L593.3 440.8L593.7 440.7L594.6 439.9L595.3 438.3L595.5 438.9L596.4 445.5L596.7 446.7L597.3 444.2L598.2 441.6L598.3 440.8L599.1 443.4L600.0 445.2L600.0 445.0L600.9 444.8L601.8 443.3L602.0 443.3L602.7 441.1L603.6 440.2L603.7 440.0L604.5 438.2L605.4 435.5L605.8 435.0L606.3 435.0L607.2 435.4L607.5 435.8L608.1 437.4L609.0 441.5L609.2 442.5L609.9 444.5L610.8 447.4L610.8 447.5L611.7 446.1L612.5 444.2L612.6 444.1L613.5 446.5L614.2 446.7L614.4 448.9L615.3 455.5L615.3 455.0L616.2 456.2L617.0 456.7L617.1 457.0L618.0 457.1L618.9 457.9L619.2 457.5L619.8 456.5L620.7 455.9L621.3 455.0L621.6 454.4L622.5 451.1L623.3 448.3L623.4 447.8L624.3 444.7L625.0 443.3L625.2 442.3L626.1 441.3L627.0 440.1L627.0 440.0L627.9 434.8L628.3 431.7L628.8 435.2L629.7 440.8L629.7 440.6L630.6 444.8L631.3 446.7L631.5 445.7L632.4 443.3L633.0 440.8L633.3 439.8L634.2 440.1L634.7 439.2L635.1 440.2L636.0 442.2L636.7 442.5L636.9 442.0L637.8 437.2L638.3 434.2L638.7 437.7L639.6 444.9L639.7 445.0L640.5 439.2L640.8 436.7L641.4 435.7L642.3 435.6L643.0 435.0L643.2 435.1L644.1 431.3L645.0 430.0L645.0 429.2L645.9 430.7L646.8 432.0L647.0 432.5L647.7 432.7L648.6 434.7L648.7 435.0L649.5 432.9L650.4 431.9L650.8 430.8L651.3 430.4L652.2 428.4L653.0 425.8L653.1 426.1L654.0 426.6L654.7 427.5L654.9 426.0L655.8 423.6L656.7 420.0L656.7 420.2L657.6 422.2L658.3 423.3L658.5 423.5L659.4 426.7L660.3 427.8L660.3 428.3L661.2 427.1L662.0 426.7L662.1 425.9L663.0 422.9L663.7 420.0L663.9 421.0L664.8 420.9L665.0 421.7L665.7 425.7L666.6 430.9L666.7 430.8L667.5 432.0L668.3 434.2L668.4 433.1L669.3 429.4L670.0 425.8L670.2 425.9L671.1 423.7L672.0 421.2L672.0 420.8L672.9 424.7L673.7 428.3L673.8 428.3L674.7 428.8L675.6 429.8L675.8 429.2L676.5 427.2L677.4 424.9L677.5 425.0L678.3 427.3L679.2 430.4L679.7 430.8L680.1 429.4L681.0 427.4L681.3 427.5L681.9 430.5L682.5 435.0L682.8 436.5L683.7 440.6L684.2 442.5L684.6 440.0L685.5 436.0L685.8 435.0L686.4 434.9L687.3 434.7L688.0 434.2L688.2 434.8L689.1 436.2L689.7 436.7L690.0 436.9L690.9 440.3L691.3 441.7L691.8 442.7L692.7 443.8L693.0 443.3L693.6 440.5L694.5 437.7L695.0 435.0L695.4 434.2L696.3 432.5L696.7 430.8L697.2 431.0L698.1 433.0L698.7 433.3L699.0 434.2L699.9 434.5L700.3 435.0L700.8 436.2L701.7 439.9L702.0 441.7L702.6 442.0L703.5 443.3L704.2 445.0L704.4 445.8L705.3 452.0L705.8 455.0L706.2 453.4L707.1 452.3L707.5 450.8L708.0 449.7L708.9 447.2L709.2 445.8L709.8 445.4L710.7 443.8L711.3 442.5L711.6 443.8L712.5 445.7L713.3 446.7L713.4 446.8L714.3 445.8L715.2 442.9L715.3 443.3L716.1 441.6L717.0 440.3L717.5 440.3L717.9 441.0L718.8 443.8L719.2 445.0L719.7 447.9L720.6 453.2L720.8 454.2L721.5 454.3L722.4 452.9L723.0 453.3L723.3 453.1L724.2 453.2L725.0 453.0L725.1 452.9L726.0 453.8L726.9 455.9L727.0 455.8L727.8 458.6L728.3 460.8L728.7 458.6L729.6 452.1L729.7 451.7L730.5 453.1L731.4 453.9L731.7 453.3L732.3 452.3L733.2 453.1L733.7 452.5L734.1 451.3L735.0 447.2L735.0 447.5L735.9 445.9L736.7 445.8L736.8 447.5L737.7 458.3L737.7 458.6L738.3 469.2L738.6 468.4L739.5 464.8L739.7 463.3L740.4 461.6L740.8 460.8L741.3 462.6L742.2 467.0L742.5 468.3L743.1 470.5L744.0 473.3L744.2 473.3L744.9 469.1L745.8 463.2L745.8 463.3L746.7 459.3L747.0 458.3L747.6 460.0L748.3 460.8L748.5 460.0L749.4 454.7L750.0 452.5L750.3 451.9L751.2 450.3L751.7 450.0L752.1 450.9L753.0 451.3L753.3 452.5L753.9 456.0L754.7 461.7L754.8 460.8L755.7 460.1L756.3 459.2L756.6 459.8L757.5 458.3L758.3 457.5L758.4 457.4L759.3 460.1L759.7 460.0L760.2 462.7L760.8 467.5L761.1 467.0L762.0 466.9L762.5 465.8L762.9 465.8L763.7 468.3L763.8 467.9L764.7 461.0L765.0 459.2L765.6 457.8L766.5 457.5L767.0 457.5L767.4 456.2L768.3 453.4L768.7 452.5L769.2 452.7L770.1 452.3L770.8 453.3L771.0 453.0L771.9 455.2L772.5 455.0L772.8 454.7L773.7 454.0L774.6 452.7L774.7 453.3L775.5 451.3L776.3 450.0L776.4 450.9L777.3 452.7L778.2 454.7L778.3 455.0L779.1 451.9L780.0 449.8L780.0 450.0L780.9 452.3L781.7 453.3L781.8 452.9L782.7 450.9L783.6 449.2L783.7 448.3L784.5 450.2L785.3 451.7L785.4 452.1L786.3 453.3L787.0 455.8L787.2 454.5L788.1 453.5L788.7 451.7L789.0 452.5L789.9 456.0L790.3 456.7L790.8 460.1L791.7 465.0L791.7 465.8L792.6 468.7L792.7 469.2L793.5 462.4L793.7 460.0L794.4 457.7L795.0 455.0L795.3 455.4L796.2 453.4L797.0 453.3L797.1 453.6L798.0 451.2L798.7 450.0L798.9 451.4L799.8 453.7L800.3 454.2L800.7 453.8L801.6 454.5L802.5 454.6L802.5 455.0L803.4 456.3L804.3 457.4L804.7 458.3L805.2 457.3L806.1 454.1L806.7 453.3L807.0 452.9L807.9 453.8L808.7 454.2L808.8 453.3L809.7 452.8L810.6 452.6L810.8 451.7L811.5 451.0L812.4 448.0L812.5 448.3L813.3 445.5L814.2 444.2L814.2 444.7L815.1 443.9L816.0 442.2L816.3 441.7L816.9 441.6L817.8 442.7L818.3 443.7L818.7 444.3L819.6 444.0L820.3 443.0L820.5 442.5L821.4 444.3L822.3 446.2L822.5 446.7L823.2 447.1L824.1 448.9L824.7 449.2L825.0 449.8L825.9 452.7L826.8 453.9L827.0 455.0L827.7 453.7L828.6 452.7L829.2 450.8L829.5 450.8L830.0 450.0L830.4 448.6L831.3 447.2L832.0 446.7L832.2 446.8L833.1 445.6L834.0 444.9L834.2 445.0L834.9 446.1L835.8 447.7L836.3 448.3L836.7 449.3L837.6 448.4L838.3 449.2L838.5 449.1L839.4 447.4L840.3 446.8L840.3 446.7L841.2 448.1L842.0 448.7L842.1 447.7L843.0 445.4L843.9 442.9L844.2 441.7L844.8 440.4L845.7 441.2L846.3 440.3L846.6 440.3L847.5 440.7L848.0 440.8L848.4 442.4L849.3 445.9L849.7 446.7L850.2 446.2L851.1 447.4L851.3 447.5L852.0 446.2L852.9 446.0L853.3 445.8L853.8 446.5L854.7 447.8L855.0 449.2L855.6 446.4L856.5 443.1L856.7 442.5L857.4 440.6L857.5 440.0L858.3 446.4L858.7 448.3L859.2 447.3L860.1 446.2L860.8 445.0L861.0 445.3L861.9 445.3L862.8 445.0L863.0 444.2L863.7 443.8L864.6 441.2L865.0 440.8L865.5 439.5L866.4 439.5L866.7 438.3L867.3 438.6L868.2 440.5L868.3 440.8L869.1 438.6L870.0 435.0L870.0 435.0L870.9 433.9L871.7 433.3L871.8 434.2L872.7 434.3L873.6 435.8L873.7 435.8L874.5 435.1L875.4 432.6L875.8 432.5L876.3 433.2L877.2 435.2L877.5 435.8L878.1 437.7L878.7 439.2L879.0 438.5L879.9 438.6L880.8 437.6L880.8 438.3L881.7 438.6L882.6 440.1L883.0 440.8L883.5 440.9L884.4 443.4L885.0 443.3L885.3 443.4L886.2 445.0L887.0 446.7L887.1 447.3L888.0 448.6L888.7 449.2L888.9 448.0L889.8 446.2L890.0 445.0L890.7 447.8L891.3 450.0L891.6 450.5L892.5 453.1L893.0 454.2L893.4 456.3L894.2 461.7L894.3 461.7L895.2 465.9L895.8 467.5L896.1 466.4L897.0 464.0L897.0 463.3L897.9 464.6L898.7 466.7L898.8 466.1L899.7 466.1L900.6 467.4L900.8 467.0L901.5 466.7L902.4 465.3L903.0 465.8L903.3 464.2L904.2 462.8L904.7 460.8L905.1 459.6L906.0 457.6L906.7 455.0L906.9 454.8L907.8 458.0L908.3 459.2L908.7 458.4L909.6 459.0L910.3 458.3L910.5 458.5L911.4 458.1L912.3 457.1L912.5 457.5L913.2 458.4L914.1 457.2L914.7 458.0L915.0 457.3L915.9 458.5L916.7 458.3L916.8 457.0L917.7 452.4L918.3 450.0L918.6 449.5L919.5 448.5L919.7 448.0L920.4 450.3L921.3 452.0L921.3 451.7L922.2 457.1L922.5 460.0L923.1 458.7L924.0 456.8L924.2 455.8L924.9 456.7L925.8 459.5L925.8 459.2L926.7 460.1L927.6 461.5L928.0 462.5L928.5 462.2L929.4 464.3L929.7 464.2L930.3 466.5L930.8 468.3L931.2 469.0L932.1 468.3L933.0 467.7L933.0 468.3L933.9 467.0L934.7 466.7L934.8 465.9L935.7 464.3L936.3 461.7L936.6 460.5L937.5 458.0L938.3 456.7L938.4 456.4L939.3 455.1L940.2 455.0L940.3 455.0L941.1 454.3L942.0 453.3L942.5 452.5L942.9 452.2L943.8 452.6L944.7 453.7L944.7 453.6L945.6 453.4L946.5 452.5L946.7 452.5L947.4 452.3L948.3 452.5L948.7 451.7L949.2 451.7L950.1 452.9L950.8 454.2L951.0 454.2L951.9 454.8L952.5 455.0L952.8 456.1L953.7 456.9L954.2 457.5L954.6 457.1L955.5 455.3L956.3 454.2L956.4 454.7L957.3 455.7L958.0 455.8L958.2 455.0L959.1 452.4L959.7 451.7L960.0 451.9L960.9 453.6L961.3 454.7L961.8 455.1L962.7 453.6L963.3 453.7L963.6 454.0L964.5 454.3L965.3 454.3L965.4 455.1L966.3 454.0L967.2 455.4L967.5 455.0" stroke="#f00000" stroke-width="1.6" stroke-linejoin="round" fill="none"/></g>
<g clip-path="url(#c2)"><text transform="translate(5.00 396.9) scale(0.84 1.36)" font-size="8.6" x="1.73" fill="#cfcfcf" xml:space="preserve">[</text><text x="9.92" y="396.5" font-size="9.84" fill="#cfcfcf">金</text><text transform="translate(19.76 396.9) scale(0.84 1.36)" font-size="8.6" x="1.73 6.39 12.25 19.30 23.97 29.82 36.88 41.54 47.39 54.45 59.11 64.97 70.82" fill="#cfcfcf" xml:space="preserve"> 27/02 23,101</text><text x="85.77" y="396.9" font-size="9.84" fill="#cfcfcf">×</text><text transform="translate(93.56 396.9) scale(0.84 1.36)" font-size="8.6" x="0.54 7.59 12.25 18.11 25.16" fill="#cfcfcf" xml:space="preserve">1.00]</text><text x="118.16" y="396.5" font-size="9.84" fill="#cfcfcf">－</text><text transform="translate(128.00 396.9) scale(0.84 1.36)" font-size="8.6" x="1.73" fill="#cfcfcf" xml:space="preserve">[</text><text x="132.92" y="396.5" font-size="9.84" fill="#cfcfcf">白金</text><text transform="translate(152.60 396.9) scale(0.84 1.36)" font-size="8.6" x="1.73 6.39 12.25 19.30 23.97 29.82 36.88 41.54 48.59 53.25 59.11 64.97" fill="#cfcfcf" xml:space="preserve"> 27/02 9,300</text><text x="213.69" y="396.9" font-size="9.84" fill="#cfcfcf">×</text><text transform="translate(221.48 396.9) scale(0.84 1.36)" font-size="8.6" x="0.54 7.59 12.25 18.11 25.16 31.02" fill="#cfcfcf" xml:space="preserve">1.00] </text><text x="251.00" y="396.5" font-size="9.84" fill="#cfcfcf">終値</text><text transform="translate(270.68 396.9) scale(0.84 1.36)" font-size="8.6" x="1.73" fill="#cfcfcf" xml:space="preserve"> </text><text x="275.60" y="396.5" font-size="9.84" fill="#cfcfcf">時刻</text><text transform="translate(295.28 396.9) scale(0.84 1.36)" font-size="8.6" x="1.73 6.39 12.25 19.30 23.97 29.82 36.88 41.54 47.39 54.45 59.11 64.97 70.82" fill="#cfcfcf" xml:space="preserve">:06:00 13,801</text></g>
<path d="M5.5 533.8H969.4V385.9" stroke="#b0b0b0" stroke-width="1.4" fill="none"/>
<g fill="#bdbdbd"><text transform="translate(10.60 541.5) scale(0.84 1.36)" font-size="8.6" x="0.54 6.39" xml:space="preserve">08</text><text transform="translate(36.00 541.5) scale(0.84 1.36)" font-size="8.6" x="0.54 6.39" xml:space="preserve">09</text><text transform="translate(84.25 541.5) scale(0.84 1.36)" font-size="8.6" x="0.54 6.39" xml:space="preserve">10</text><text transform="translate(132.50 541.5) scale(0.84 1.36)" font-size="8.6" x="0.54 6.39" xml:space="preserve">11</text><text transform="translate(180.75 541.5) scale(0.84 1.36)" font-size="8.6" x="0.54 6.39" xml:space="preserve">12</text><text transform="translate(229.00 541.5) scale(0.84 1.36)" font-size="8.6" x="0.54 6.39" xml:space="preserve">13</text><text transform="translate(277.00 541.5) scale(0.84 1.36)" font-size="8.6" x="0.54 6.39" xml:space="preserve">14</text><text transform="translate(325.25 541.5) scale(0.84 1.36)" font-size="8.6" x="0.54 6.39" xml:space="preserve">15</text><text transform="translate(356.00 541.5) scale(0.84 1.36)" font-size="8.6" x="0.54 6.39" xml:space="preserve">17</text><text transform="translate(404.50 541.5) scale(0.84 1.36)" font-size="8.6" x="0.54 6.39" xml:space="preserve">18</text><text transform="translate(452.75 541.5) scale(0.84 1.36)" font-size="8.6" x="0.54 6.39" xml:space="preserve">19</text><text transform="translate(501.00 541.5) scale(0.84 1.36)" font-size="8.6" x="0.54 6.39" xml:space="preserve">20</text><text transform="translate(549.25 541.5) scale(0.84 1.36)" font-size="8.6" x="0.54 6.39" xml:space="preserve">21</text><text transform="translate(595.25 541.5) scale(0.84 1.36)" font-size="8.6" x="0.54 6.39" xml:space="preserve">22</text><text transform="translate(643.50 541.5) scale(0.84 1.36)" font-size="8.6" x="0.54 6.39" xml:space="preserve">23</text><text transform="translate(691.75 541.5) scale(0.84 1.36)" font-size="8.6" x="0.54 6.39" xml:space="preserve">00</text><text transform="translate(739.50 541.5) scale(0.84 1.36)" font-size="8.6" x="0.54 6.39" xml:space="preserve">01</text><text transform="translate(788.00 541.5) scale(0.84 1.36)" font-size="8.6" x="0.54 6.39" xml:space="preserve">02</text><text transform="translate(835.50 541.5) scale(0.84 1.36)" font-size="8.6" x="0.54 6.39" xml:space="preserve">03</text><text transform="translate(883.00 541.5) scale(0.84 1.36)" font-size="8.6" x="0.54 6.39" xml:space="preserve">04</text><text transform="translate(929.25 541.5) scale(0.84 1.36)" font-size="8.6" x="0.54 6.39" xml:space="preserve">05</text><text transform="translate(954.60 541.5) scale(0.84 1.36)" font-size="8.6" x="0.54 6.39" xml:space="preserve">06</text><text transform="translate(24.45 529.6999999999999) scale(0.84 1.36)" font-size="8.6" x="0.54 6.39" xml:space="preserve">23</text><text transform="translate(691.95 529.6999999999999) scale(0.84 1.36)" font-size="8.6" x="0.54 6.39" xml:space="preserve">24</text><text transform="translate(969.60 397.9) scale(0.84 1.36)" font-size="8.6" x="0.54 6.39 13.45 18.11 23.97 29.82" xml:space="preserve">14,250</text><text transform="translate(969.60 429.2) scale(0.84 1.36)" font-size="8.6" x="0.54 6.39 13.45 18.11 23.97 29.82" xml:space="preserve">14,000</text><text transform="translate(969.60 491.8) scale(0.84 1.36)" font-size="8.6" x="0.54 6.39 13.45 18.11 23.97 29.82" xml:space="preserve">13,500</text><text transform="translate(969.60 523.2) scale(0.84 1.36)" font-size="8.6" x="0.54 6.39 13.45 18.11 23.97 29.82" xml:space="preserve">13,250</text></g>
<rect x="969.7" y="448" width="46.39999999999998" height="17" fill="#dcdcdc"/>
<text transform="translate(977.20 459.1) scale(0.84 1.36)" font-size="8.6" x="0.54 6.39 13.45 18.11 23.97 29.82" fill="#000" font-weight="bold" xml:space="preserve">13,801</text>
<rect x="4.6" y="201.3" width="1013" height="4.1" fill="#b4b4b4"/><rect x="4.6" y="201.9" width="1013" height="2.6" fill="#fff"/><rect x="4.6" y="382.5" width="1013" height="4.1" fill="#b4b4b4"/><rect x="4.6" y="383.1" width="1013" height="2.6" fill="#fff"/>
</svg>
</body></html>
